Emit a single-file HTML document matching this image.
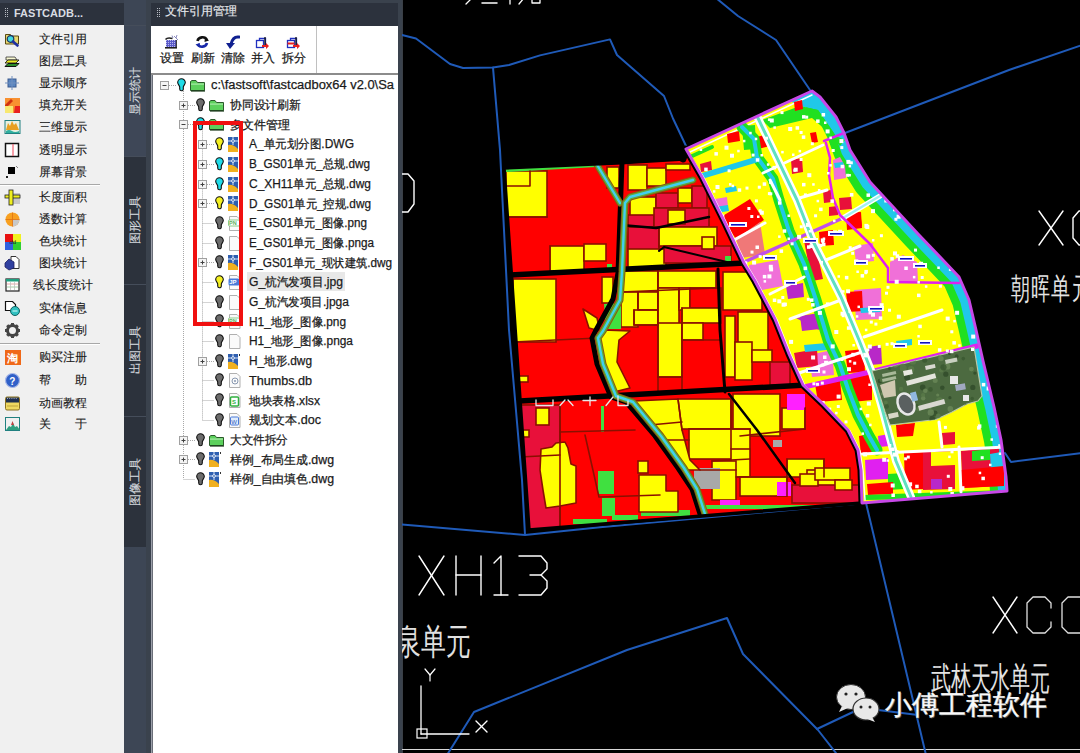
<!DOCTYPE html><html><head><meta charset="utf-8"><style>
*{box-sizing:border-box}
body{margin:0;width:1080px;height:753px;overflow:hidden;background:#000;position:relative;font-family:"Liberation Sans",sans-serif;}
.a{position:absolute}
#lp{left:0;top:0;width:124px;height:753px;background:#f0f0f0}
#lph{left:0;top:0;width:124px;height:25px;background:#2c323d;color:#e8eaee;font-size:12px}
.it{position:absolute;left:0;width:124px;height:16px;font-size:12px;color:#1a1a1a;line-height:16px;-webkit-text-stroke:0.12px #1a1a1a}
.it .t{position:absolute;left:39px;top:0;white-space:nowrap}
.ic{position:absolute;left:4px;top:0;width:17px;height:17px}
.sep{position:absolute;left:0;width:100px;height:2px;background:#a8a8a8;border-bottom:1px solid #fff}
#strip{left:124px;top:0;width:22px;height:753px;background:#3d4655}
#fp{left:146px;top:0;width:256px;height:753px;background:#3a424d}
.tab{position:absolute;left:124px;width:22px;background:#2c323c;border-top:1px solid #454d5a}
.vt{position:absolute;color:#d4d8de;font-size:12px;-webkit-text-stroke:0.15px #d4d8de;white-space:nowrap;transform:rotate(-90deg);transform-origin:center}
.tr{position:absolute;height:18px;font-size:12px;color:#1e1e1e;line-height:18px;white-space:nowrap}
.lat{font-size:13px}
</style></head><body>
<svg class="a" style="left:0;top:0" width="1080" height="753" viewBox="0 0 1080 753">
<rect x="402" y="0" width="678" height="753" fill="#000"/>
<rect x="402" y="0" width="1" height="753" fill="#3a3f46"/>
<rect x="402" y="749" width="678" height="1" fill="#d8d8d8"/>
<polyline points="402,35 416,38.5 450,64 463,68 493,67.6 509,65 540,55.4 610,39.4 617,55 664,96 673,118.5 687,148" fill="none" stroke="#1f5ab8" stroke-width="2" stroke-linejoin="round" stroke-linecap="round" />
<polyline points="493,67.6 500,150 509,330 522,480 525,535" fill="none" stroke="#1f5ab8" stroke-width="2" stroke-linejoin="round" stroke-linecap="round" />
<polyline points="716,-2 738,16 776,40 810,90" fill="none" stroke="#1f5ab8" stroke-width="2" stroke-linejoin="round" stroke-linecap="round" />
<polyline points="845,133 1009,70 1082,45" fill="none" stroke="#1f5ab8" stroke-width="2" stroke-linejoin="round" stroke-linecap="round" />
<polyline points="402,524.4 525,535 600,527.2 866,503" fill="none" stroke="#1f5ab8" stroke-width="2" stroke-linejoin="round" stroke-linecap="round" />
<polyline points="866,503 926,755" fill="none" stroke="#1f5ab8" stroke-width="2" stroke-linejoin="round" stroke-linecap="round" />
<polyline points="447,755 474,712 627,650 727,618 743,654 818,730 836,753" fill="none" stroke="#1f5ab8" stroke-width="2" stroke-linejoin="round" stroke-linecap="round" />
<polyline points="817,729 853,712 878,710 918,715" fill="none" stroke="#1f5ab8" stroke-width="2" stroke-linejoin="round" stroke-linecap="round" />
<polyline points="1005,453 1011,462 1082,453" fill="none" stroke="#1f5ab8" stroke-width="2" stroke-linejoin="round" stroke-linecap="round" />
<polygon points="504,168 617,163 683,159 686,149 702,177 724,221 744,263 755,281 775,319 789,354 803,385 824,405 848,430 858,450 861,470 862,503 529,530" fill="#ff0000" stroke="#000" stroke-width="2" stroke-linejoin="round" />
<clipPath id="clL"><polygon points="504,168 617,163 683,159 686,149 702,177 724,221 744,263 755,281 775,319 789,354 803,385 824,405 848,430 858,450 861,470 862,503 529,530"/></clipPath>
<g clip-path="url(#clL)">
<rect x="506" y="171" width="41" height="46" fill="#ffff00" stroke="#8a1000" stroke-width="1.6"/>
<rect x="550" y="246" width="34" height="25" fill="#ffff00" stroke="#8a1000" stroke-width="1.6"/>
<rect x="584" y="244" width="22" height="17" fill="#ffff00" stroke="#8a1000" stroke-width="1.6"/>
<rect x="607" y="167" width="12" height="21" fill="#ffff00" stroke="#8a1000" stroke-width="1.6"/>
<rect x="607" y="264" width="5" height="5" fill="#40e040"/>
<rect x="628" y="165" width="19" height="25" fill="#ffff00" stroke="#8a1000" stroke-width="1.6"/>
<rect x="647" y="168" width="19" height="18" fill="#ffff00" stroke="#8a1000" stroke-width="1.6"/>
<rect x="666" y="164" width="24" height="6" fill="#ffff00" stroke="#8a1000" stroke-width="1.6"/>
<rect x="630" y="197" width="26" height="24" fill="#ffff00" stroke="#8a1000" stroke-width="1.6"/>
<rect x="656" y="193" width="22" height="15" fill="#e8103a" stroke="#8a1000" stroke-width="1.6"/>
<rect x="678" y="188" width="14" height="15" fill="#ffff00" stroke="#8a1000" stroke-width="1.6"/>
<rect x="692" y="186" width="15" height="22" fill="#e8103a" stroke="#8a1000" stroke-width="1.6"/>
<rect x="628" y="215" width="26" height="12" fill="#e8103a" stroke="#8a1000" stroke-width="1.6"/>
<rect x="654" y="208" width="55" height="19" fill="#e8103a" stroke="#8a1000" stroke-width="1.6"/>
<rect x="668" y="210" width="17" height="14" fill="#ffff00" stroke="#8a1000" stroke-width="1.6"/>
<rect x="628" y="227" width="31" height="24" fill="#e8103a" stroke="#8a1000" stroke-width="1.6"/>
<rect x="628" y="249" width="38" height="19" fill="#ffff00" stroke="#8a1000" stroke-width="1.6"/>
<rect x="659" y="227" width="58" height="19" fill="#ffff00" stroke="#8a1000" stroke-width="1.6"/>
<rect x="664" y="246" width="67" height="17" fill="#e8103a" stroke="#8a1000" stroke-width="1.6"/>
<rect x="702" y="237" width="12" height="12" fill="#ffff00" stroke="#8a1000" stroke-width="1.6"/>
<rect x="725" y="256" width="6" height="6" fill="#40e040"/>
<rect x="513" y="279" width="43" height="63" fill="#ffff00" stroke="#8a1000" stroke-width="1.6"/>
<rect x="602" y="277" width="11" height="26" fill="#ffff00" stroke="#8a1000" stroke-width="1.6"/>
<rect x="519" y="376" width="9" height="6" fill="#ffff00" stroke="#8a1000" stroke-width="1.6"/>
<rect x="621" y="271" width="37" height="21" fill="#ffff00" stroke="#8a1000" stroke-width="1.6"/>
<rect x="621" y="292" width="17" height="35" fill="#ffff00" stroke="#8a1000" stroke-width="1.6"/>
<rect x="638" y="292" width="20" height="18" fill="#ffff00" stroke="#8a1000" stroke-width="1.6"/>
<rect x="634" y="310" width="24" height="15" fill="#ffff00" stroke="#8a1000" stroke-width="1.6"/>
<rect x="658" y="271" width="58" height="17" fill="#ffff00" stroke="#8a1000" stroke-width="1.6"/>
<rect x="658" y="288" width="21" height="39" fill="#ffff00" stroke="#8a1000" stroke-width="1.6"/>
<rect x="658" y="323" width="24" height="54" fill="#ffff00" stroke="#8a1000" stroke-width="1.6"/>
<rect x="679" y="288" width="11" height="22" fill="#ffff00" stroke="#8a1000" stroke-width="1.6"/>
<rect x="690" y="288" width="31" height="20" fill="#ff0000" stroke="#8a1000" stroke-width="1.6"/>
<rect x="682" y="308" width="39" height="15" fill="#ffff00" stroke="#8a1000" stroke-width="1.6"/>
<rect x="682" y="323" width="21" height="17" fill="#ffff00" stroke="#8a1000" stroke-width="1.6"/>
<rect x="723" y="272" width="39" height="38" fill="#ffff00" stroke="#8a1000" stroke-width="1.6"/>
<rect x="725" y="316" width="10" height="61" fill="#ffff00" stroke="#8a1000" stroke-width="1.6"/>
<rect x="738" y="312" width="30" height="40" fill="#ffff00" stroke="#8a1000" stroke-width="1.6"/>
<rect x="735" y="342" width="17" height="38" fill="#ffff00" stroke="#8a1000" stroke-width="1.6"/>
<rect x="752" y="350" width="20" height="12" fill="#ffff00" stroke="#8a1000" stroke-width="1.6"/>
<rect x="770" y="362" width="20" height="23" fill="#e8103a" stroke="#8a1000" stroke-width="1.6"/>
<rect x="521" y="405" width="39" height="125" fill="#e8103a" stroke="#8a1000" stroke-width="1.6"/>
<rect x="536" y="408" width="13" height="17" fill="#ffff00" stroke="#8a1000" stroke-width="1.6"/>
<rect x="523" y="430" width="6" height="7" fill="#ffff00" stroke="#8a1000" stroke-width="1.6"/>
<rect x="601" y="406" width="3" height="26" fill="#40e040"/>
<rect x="598" y="471" width="16" height="23" fill="#40e040"/>
<rect x="602" y="498" width="13" height="18" fill="#40e040"/>
<rect x="573" y="519" width="34" height="5" fill="#40e040"/>
<rect x="612" y="515" width="26" height="5" fill="#40e040"/>
<rect x="641" y="510" width="49" height="6" fill="#40e040"/>
<rect x="638" y="461" width="10" height="12" fill="#ffff00" stroke="#8a1000" stroke-width="1.6"/>
<rect x="678" y="399" width="53" height="30" fill="#ffff00" stroke="#8a1000" stroke-width="1.6"/>
<rect x="733" y="394" width="47" height="42" fill="#ffff00" stroke="#8a1000" stroke-width="1.6"/>
<rect x="782" y="408" width="23" height="21" fill="#ffff00" stroke="#8a1000" stroke-width="1.6"/>
<rect x="689" y="429" width="61" height="30" fill="#ffff00" stroke="#8a1000" stroke-width="1.6"/>
<rect x="731" y="449" width="19" height="28" fill="#ffff00" stroke="#8a1000" stroke-width="1.6"/>
<rect x="712" y="461" width="24" height="39" fill="#ffff00" stroke="#8a1000" stroke-width="1.6"/>
<rect x="740" y="477" width="47" height="19" fill="#ffff00" stroke="#8a1000" stroke-width="1.6"/>
<rect x="787" y="459" width="37" height="18" fill="#ffff00" stroke="#8a1000" stroke-width="1.6"/>
<rect x="807" y="470" width="40" height="17" fill="#ffff00" stroke="#8a1000" stroke-width="1.6"/>
<rect x="787" y="394" width="18" height="16" fill="#ff20ff"/>
<rect x="777" y="482" width="14" height="14" fill="#ff20ff"/>
<rect x="720" y="500" width="20" height="7" fill="#ff20ff"/>
<rect x="773" y="440" width="9" height="7" fill="#a8a8a8"/>
<rect x="694" y="468" width="26" height="21" fill="#a8a8a8"/>
<rect x="700" y="505" width="160" height="4" fill="#40e040"/>
<rect x="792" y="485" width="68" height="18" fill="#e8103a" stroke="#8a1000" stroke-width="1.6"/>
<rect x="800" y="474" width="18" height="12" fill="#ffff00" stroke="#8a1000" stroke-width="1.6"/>
<rect x="815" y="468" width="35" height="12" fill="#ffff00" stroke="#8a1000" stroke-width="1.6"/>
<rect x="835" y="480" width="17" height="10" fill="#ffff00" stroke="#8a1000" stroke-width="1.6"/>
<polygon points="506,169 596,164 597,167 506,172" fill="#40e040" />
<polygon points="583,309 597,318 600,331 589,328" fill="#ffff00" stroke="#8a1000" stroke-width="1.6" stroke-linejoin="round" />
<polygon points="604,304 621,303 621,329 606,329" fill="#40e040" />
<polygon points="603,330 630,331 619,340 617,362 630,388 614,392 602,366 599,340" fill="#ffff00" stroke="#8a1000" stroke-width="1.6" stroke-linejoin="round" />
<polygon points="541,449 552,447 556,443 565,442 568,448 571,464 576,466 576,503 560,506 546,508 543,490 540,470" fill="#ffff00" stroke="#8a1000" stroke-width="1.6" stroke-linejoin="round" />
<polygon points="639,475 666,475 666,491 678,491 678,512 639,512" fill="#ffff00" stroke="#8a1000" stroke-width="1.6" stroke-linejoin="round" />
<polygon points="634,401 678,399 682,430 690,460 700,470 686,470 668,450 650,425" fill="#ffff00" stroke="#8a1000" stroke-width="1.6" stroke-linejoin="round" />
<polyline points="506,186 530,186 530,171" fill="none" stroke="#8a1000" stroke-width="1.6" stroke-linejoin="round" stroke-linecap="round" />
<polyline points="513,342 598,338" fill="none" stroke="#8a1000" stroke-width="1.6" stroke-linejoin="round" stroke-linecap="round" />
<polyline points="547,217 506,217" fill="none" stroke="#8a1000" stroke-width="1.6" stroke-linejoin="round" stroke-linecap="round" />
<polyline points="550,246 550,273" fill="none" stroke="#8a1000" stroke-width="1.6" stroke-linejoin="round" stroke-linecap="round" />
<polyline points="658,270 658,392" fill="none" stroke="#8a1000" stroke-width="1.6" stroke-linejoin="round" stroke-linecap="round" />
<polyline points="621,292 716,288" fill="none" stroke="#8a1000" stroke-width="1.6" stroke-linejoin="round" stroke-linecap="round" />
<polyline points="638,292 638,310 658,310" fill="none" stroke="#8a1000" stroke-width="1.6" stroke-linejoin="round" stroke-linecap="round" />
<polyline points="634,310 634,325 658,325" fill="none" stroke="#8a1000" stroke-width="1.6" stroke-linejoin="round" stroke-linecap="round" />
<polyline points="682,308 682,392" fill="none" stroke="#8a1000" stroke-width="1.6" stroke-linejoin="round" stroke-linecap="round" />
<polyline points="658,377 682,377" fill="none" stroke="#8a1000" stroke-width="1.6" stroke-linejoin="round" stroke-linecap="round" />
<polyline points="682,340 721,340" fill="none" stroke="#8a1000" stroke-width="1.6" stroke-linejoin="round" stroke-linecap="round" />
<polyline points="679,288 679,308" fill="none" stroke="#8a1000" stroke-width="1.6" stroke-linejoin="round" stroke-linecap="round" />
<polyline points="628,227 659,227 659,251" fill="none" stroke="#8a1000" stroke-width="1.6" stroke-linejoin="round" stroke-linecap="round" />
<polyline points="520,457 560,455" fill="none" stroke="#8a1000" stroke-width="1.6" stroke-linejoin="round" stroke-linecap="round" />
<polyline points="585,435 599,497" fill="none" stroke="#8a1000" stroke-width="1.6" stroke-linejoin="round" stroke-linecap="round" />
<polyline points="560,432 635,430" fill="none" stroke="#8a1000" stroke-width="1.6" stroke-linejoin="round" stroke-linecap="round" />
<polyline points="600,497 660,495" fill="none" stroke="#8a1000" stroke-width="1.6" stroke-linejoin="round" stroke-linecap="round" />
<polyline points="560,404 560,530" fill="none" stroke="#8a1000" stroke-width="1.6" stroke-linejoin="round" stroke-linecap="round" />
<polyline points="678,399 682,430" fill="none" stroke="#8a1000" stroke-width="1.6" stroke-linejoin="round" stroke-linecap="round" />
<polyline points="731,399 731,449" fill="none" stroke="#8a1000" stroke-width="1.6" stroke-linejoin="round" stroke-linecap="round" />
<polyline points="689,429 750,429" fill="none" stroke="#8a1000" stroke-width="1.6" stroke-linejoin="round" stroke-linecap="round" />
<polyline points="712,461 750,459" fill="none" stroke="#8a1000" stroke-width="1.6" stroke-linejoin="round" stroke-linecap="round" />
<polyline points="736,477 787,477" fill="none" stroke="#8a1000" stroke-width="1.6" stroke-linejoin="round" stroke-linecap="round" />
<polyline points="787,459 787,496" fill="none" stroke="#8a1000" stroke-width="1.6" stroke-linejoin="round" stroke-linecap="round" />
<polyline points="824,459 824,477" fill="none" stroke="#8a1000" stroke-width="1.6" stroke-linejoin="round" stroke-linecap="round" />
<polyline points="650,425 682,422" fill="none" stroke="#8a1000" stroke-width="1.6" stroke-linejoin="round" stroke-linecap="round" />
<polyline points="660,440 689,440" fill="none" stroke="#8a1000" stroke-width="1.6" stroke-linejoin="round" stroke-linecap="round" />
<polyline points="700,470 736,470" fill="none" stroke="#8a1000" stroke-width="1.6" stroke-linejoin="round" stroke-linecap="round" />
<polyline points="740,436 805,429" fill="none" stroke="#8a1000" stroke-width="1.6" stroke-linejoin="round" stroke-linecap="round" />
<polyline points="805,408 805,429" fill="none" stroke="#8a1000" stroke-width="1.6" stroke-linejoin="round" stroke-linecap="round" />
<polyline points="509,275 745,263" fill="none" stroke="#000" stroke-width="5.5" stroke-linejoin="round" stroke-linecap="round" />
<polyline points="520,401 806,385" fill="none" stroke="#000" stroke-width="5.5" stroke-linejoin="round" stroke-linecap="round" />
<polyline points="622,162 618,273 613,299 596,330 592,338 597,364 611,397 626,402 655,436 678,468 692,489 700,514" fill="none" stroke="#000" stroke-width="5" stroke-linejoin="round" stroke-linecap="round" />
<polyline points="729,394 757,430 795,483" fill="none" stroke="#000" stroke-width="2.5" stroke-linejoin="round" stroke-linecap="round" />
<polyline points="718,269 720,330 725,392" fill="none" stroke="#000" stroke-width="3" stroke-linejoin="round" stroke-linecap="round" />
<polyline points="621,225 656,228 709,217" fill="none" stroke="#000" stroke-width="2.5" stroke-linejoin="round" stroke-linecap="round" />
<polyline points="659,251 664,247 731,263" fill="none" stroke="#000" stroke-width="2" stroke-linejoin="round" stroke-linecap="round" />
<polyline points="596,163 620,203" fill="none" stroke="#8a5a10" stroke-width="7" stroke-linejoin="round" stroke-linecap="round" />
<polyline points="596,163 620,203" fill="none" stroke="#60a838" stroke-width="5" stroke-linejoin="round" stroke-linecap="round" />
<polyline points="596,163 620,203" fill="none" stroke="#40d0f0" stroke-width="2.4" stroke-linejoin="round" stroke-linecap="round" />
<polyline points="693,180 630,197 625,203 622,272 620,300 603,331 598,338 603,364 616,396 633,402 661,436 684,468 697,489 705,514" fill="none" stroke="#8a5a10" stroke-width="7" stroke-linejoin="round" stroke-linecap="round" />
<polyline points="693,180 630,197 625,203 622,272 620,300 603,331 598,338 603,364 616,396 633,402 661,436 684,468 697,489 705,514" fill="none" stroke="#60a838" stroke-width="5" stroke-linejoin="round" stroke-linecap="round" />
<polyline points="693,180 630,197 625,203 622,272 620,300 603,331 598,338 603,364 616,396 633,402 661,436 684,468 697,489 705,514" fill="none" stroke="#40d0f0" stroke-width="2.4" stroke-linejoin="round" stroke-linecap="round" />
</g>
<polygon points="504,168 617,163 683,159 686,149 702,177 724,221 744,263 755,281 775,319 789,354 803,385 824,405 848,430 858,450 861,470 862,503 529,530" fill="none" stroke="#000" stroke-width="3.5" stroke-linejoin="round" />
<polyline points="536,400 536,405.5 553,405.5 553,400" fill="none" stroke="#e8e8e8" stroke-width="1.3" stroke-linejoin="round" stroke-linecap="round" />
<polyline points="560,405.5 565,400" fill="none" stroke="#e8e8e8" stroke-width="1.3" stroke-linejoin="round" stroke-linecap="round" />
<polyline points="568,400 573,405.5" fill="none" stroke="#e8e8e8" stroke-width="1.3" stroke-linejoin="round" stroke-linecap="round" />
<polyline points="583,400.5 596,400.5" fill="none" stroke="#e8e8e8" stroke-width="1.3" stroke-linejoin="round" stroke-linecap="round" />
<polyline points="590,397 590,405.5" fill="none" stroke="#e8e8e8" stroke-width="1.3" stroke-linejoin="round" stroke-linecap="round" />
<polyline points="606,405.5 613,397" fill="none" stroke="#e8e8e8" stroke-width="1.3" stroke-linejoin="round" stroke-linecap="round" />
<polyline points="618,396 618,405.5 628,405.5 628,401" fill="none" stroke="#e8e8e8" stroke-width="1.3" stroke-linejoin="round" stroke-linecap="round" />
<polyline points="683,159 686,149 702,177 724,221 744,263 755,281 775,319 789,354 803,385 824,405 848,430 858,450 861,470 862,503" fill="none" stroke="#000" stroke-width="7" stroke-linejoin="round" stroke-linecap="round" />
<polygon points="686,149 812,91 820,97 836,117 844,133 850,150 870,182 894,208 918,234 941,258 959,277 969,300 976,330 983,361 994,407 1001,440 1006,477 1007,491 862,503 861,470 858,450 848,430 824,405 803,385 789,354 775,319 755,281 744,263 724,221 702,177" fill="#ffff00" />
<clipPath id="clR"><polygon points="686,149 812,91 820,97 836,117 844,133 850,150 870,182 894,208 918,234 941,258 959,277 969,300 976,330 983,361 994,407 1001,440 1006,477 1007,491 862,503 861,470 858,450 848,430 824,405 803,385 789,354 775,319 755,281 744,263 724,221 702,177"/></clipPath>
<g clip-path="url(#clR)">
<polyline points="812,91 820,97 836,117 844,133 850,150 870,182 894,208 918,234 941,258 959,277 969,300 976,330 983,361 994,407 1001,440 1006,477 1007,491" fill="none" stroke="#20e020" stroke-width="34" stroke-linejoin="round" stroke-linecap="round" />
<polyline points="812,91 820,97 836,117 844,133 850,150 870,182 894,208 918,234 941,258 959,277 969,300 976,330 983,361 994,407 1001,440 1006,477 1007,491" fill="none" stroke="#20c8e8" stroke-width="18" stroke-linejoin="round" stroke-linecap="round" />
<polygon points="790,101 812,91 836,117 845,138 836,136 818,110 800,106" fill="#20c8e8" />
<polygon points="762,120 800,106 818,110 836,136 845,140 840,146 828,132 812,118 770,128" fill="#20e020" />
<polyline points="690,152 812,95" fill="none" stroke="#ffffff" stroke-width="1.5" stroke-linejoin="round" stroke-linecap="round" />
<polyline points="690,157 712,147" fill="none" stroke="#20e020" stroke-width="4" stroke-linejoin="round" stroke-linecap="round" />
<polygon points="725,188 736,186 737,191 726,193" fill="#20c8e8" />
<polygon points="757,137 768,134 770,146 758,149" fill="#ff0000" />
<polygon points="791,160 802,158 803,172 792,174" fill="#e8103a" />
<polygon points="810,133 816,132 818,142 812,143" fill="#ff0000" />
<polygon points="727,134 739,131 740,141 728,143" fill="#ff0000" />
<polygon points="700,164 711,161 712,170 701,172" fill="#e8103a" />
<polygon points="794,102 802,100 803,109 795,111" fill="#ff0000" />
<polygon points="833,160 840,157 845,166 846,178 834,180" fill="#f070d8" />
<polygon points="834,163 843,162 844,167 835,168" fill="#20c8e8" />
<polygon points="742,126 755,125 756,149 744,150" fill="#20e020" />
<polygon points="721,217 750,199 764,220 736,239" fill="#ff0000" />
<polygon points="736,239 760,222 765,254 742,258" fill="#f07878" />
<polygon points="715,199 727,197 728,207 716,209" fill="#f070d8" />
<polygon points="715,207 728,205 729,211 716,213" fill="#20c8e8" />
<polygon points="749,265 778,260 783,286 752,292" fill="#f070d8" />
<polygon points="786,286 803,283 804,297 788,299" fill="#b828c8" />
<polygon points="804,241 814,239 823,279 812,281" fill="#e8103a" />
<polygon points="848,214 860,212 862,226 850,228" fill="#ff0000" />
<polygon points="819,232 833,230 834,245 820,246" fill="#ff0000" />
<polygon points="823,191 831,190 832,202 824,203" fill="#e8103a" />
<polygon points="839,198 851,197 852,209 840,210" fill="#e8103a" />
<polygon points="829,207 838,206 838,215 829,216" fill="#e8103a" />
<polygon points="846,214 861,212 862,228 847,230" fill="#ff0000" />
<polygon points="854,246 873,243 874,261 856,263" fill="#f070d8" />
<polygon points="890,262 903,255 917,262 918,281 890,283" fill="#f070d8" />
<polygon points="854,290 881,288 882,319 856,320" fill="#f070d8" />
<polygon points="846,292 862,291 863,311 848,312" fill="#ff0000" />
<polygon points="860,308 880,307 880,312 861,313" fill="#20c8e8" />
<polygon points="809,355 832,350 834,375 812,377" fill="#f070d8" />
<polygon points="845,351 864,349 865,372 848,373" fill="#ff0000" />
<polygon points="868,347 881,345 882,364 870,365" fill="#b828c8" />
<polygon points="794,353 817,349 818,366 797,368" fill="#e8103a" />
<polygon points="800,316 819,313 820,329 802,331" fill="#b828c8" />
<polygon points="804,345 827,343 827,350 805,352" fill="#20c8e8" />
<polygon points="896,341 912,339 912,345 897,347" fill="#20c8e8" />
<polygon points="848,378 872,374 872,400 852,402" fill="#ff0000" />
<polygon points="815,384 840,380 842,400 818,402" fill="#ff0000" />
<polygon points="859,436 872,434 873,454 861,455" fill="#ff0000" />
<polygon points="878,436 889,434 890,446 879,447" fill="#e020f0" />
<polygon points="796,318 817,315 819,330" fill="#b828c8" />
<polygon points="894,425 939,420 940,446 895,448" fill="#ffff00" />
<polygon points="896,425 915,423 913,436 897,437" fill="#ff0000" />
<polygon points="942,433 955,432 955,444 943,445" fill="#e8103a" />
<polygon points="865,460 888,458 888,479 866,480" fill="#e020f0" />
<polygon points="888,474 904,473 904,489 888,490" fill="#20e020" />
<polygon points="867,484 893,482 893,494 868,495" fill="#ff0000" />
<polygon points="904,453 923,452 923,489 905,490" fill="#ff0000" />
<polygon points="923,452 955,450 955,489 923,490" fill="#e8103a" />
<polygon points="931,452 955,451 955,465 931,466" fill="#ffff00" />
<polygon points="931,479 942,479 942,489 931,489" fill="#b828c8" />
<polygon points="961,451 999,446 1000,486 962,488" fill="#e8103a" />
<polygon points="972,451 990,449 990,460 972,461" fill="#20e020" />
<polygon points="990,454 1001,452 1002,470 991,471" fill="#20c8e8" />
<polygon points="961,470 1004,466 1004,486 962,488" fill="#ff0000" />
<polygon points="864,495 1005,490 1005,498 864,500" fill="#20e020" />
<polyline points="742,127 754,139 757,157 773,179 779,200 789,231 804,264 816,300 828,340 840,365 848,389 858,415 869,436 877,450" fill="none" stroke="#20e020" stroke-width="11" stroke-linejoin="round" stroke-linecap="round" />
<polyline points="742,127 754,139 757,157 773,179 779,200 789,231 804,264 816,300 828,340 840,365 848,389 858,415 869,436 877,450" fill="none" stroke="#20c8e8" stroke-width="4" stroke-linejoin="round" stroke-linecap="round" />
<polyline points="702,176 755,160" fill="none" stroke="#20c8e8" stroke-width="6" stroke-linejoin="round" stroke-linecap="round" />
<polyline points="763,173 823,145" fill="none" stroke="#ffffff" stroke-width="3" stroke-linejoin="round" stroke-linecap="round" />
<polyline points="734,240 765,223" fill="none" stroke="#ffffff" stroke-width="3" stroke-linejoin="round" stroke-linecap="round" />
<polyline points="796,199 827,190" fill="none" stroke="#ffffff" stroke-width="3" stroke-linejoin="round" stroke-linecap="round" />
<polyline points="826,260 860,246" fill="none" stroke="#ffffff" stroke-width="3" stroke-linejoin="round" stroke-linecap="round" />
<polyline points="770,294 804,277" fill="none" stroke="#ffffff" stroke-width="3" stroke-linejoin="round" stroke-linecap="round" />
<polyline points="790,319 841,300" fill="none" stroke="#ffffff" stroke-width="3" stroke-linejoin="round" stroke-linecap="round" />
<polyline points="790,376 868,350" fill="none" stroke="#ffffff" stroke-width="3" stroke-linejoin="round" stroke-linecap="round" />
<polyline points="864,337 942,310" fill="none" stroke="#ffffff" stroke-width="3" stroke-linejoin="round" stroke-linecap="round" />
<polyline points="862,454 1006,447" fill="none" stroke="#ffffff" stroke-width="3" stroke-linejoin="round" stroke-linecap="round" />
<polyline points="939,422 942,447" fill="none" stroke="#ffffff" stroke-width="3" stroke-linejoin="round" stroke-linecap="round" />
<polyline points="959,447 961,492" fill="none" stroke="#ffffff" stroke-width="3" stroke-linejoin="round" stroke-linecap="round" />
<polyline points="705,215 720,212" fill="none" stroke="#ffffff" stroke-width="3" stroke-linejoin="round" stroke-linecap="round" />
<polyline points="780,200 770,180" fill="none" stroke="#ffffff" stroke-width="3" stroke-linejoin="round" stroke-linecap="round" />
<polyline points="742,263 843,218" fill="none" stroke="#c050e8" stroke-width="3.5" stroke-linejoin="round" stroke-linecap="round" />
<polyline points="843,218 880,196" fill="none" stroke="#ffffff" stroke-width="5" stroke-linejoin="round" stroke-linecap="round" />
<polyline points="843,218 880,196" fill="none" stroke="#a0f0f0" stroke-width="2.5" stroke-linejoin="round" stroke-linecap="round" />
<polyline points="804,387 870,372 977,346" fill="none" stroke="#e020f0" stroke-width="5" stroke-linejoin="round" stroke-linecap="round" />
<polyline points="824,141 844,133" fill="none" stroke="#e020f0" stroke-width="2.5" stroke-linejoin="round" stroke-linecap="round" />
<polyline points="826,143 830,158 829,175 833,198 840,215 870,244 888,268 888,282 959,283" fill="none" stroke="#e020f0" stroke-width="2.5" stroke-linejoin="round" stroke-linecap="round" />
<polyline points="757,116 797,200 813,241 841,297 859,340 872,373 882,408 896,461 911,497" fill="none" stroke="#ffffff" stroke-width="8" stroke-linejoin="round" stroke-linecap="round" />
<polyline points="757,116 797,200 813,241 841,297 859,340 872,373 882,408 896,461 911,497" fill="none" stroke="#60e0c0" stroke-width="3" stroke-linejoin="round" stroke-linecap="round" />
<polygon points="872,371 974,347 982,396 978,401 967,404 951,412.5 936,419.5 907,423 890,425 885,412" fill="#4c6a40" stroke="#b8c8a8" stroke-width="1.2" stroke-linejoin="round" />
<clipPath id="clP"><polygon points="872,371 974,347 982,396 978,401 967,404 951,412.5 936,419.5 907,423 890,425 885,412"/></clipPath><g clip-path="url(#clP)">
<circle cx="901.1" cy="389.0" r="2.2" fill="#5a7a48" opacity="0.8"/>
<circle cx="938.7" cy="356.5" r="1.5" fill="#5a7a48" opacity="0.8"/>
<circle cx="903.2" cy="367.9" r="3.5" fill="#5a7a48" opacity="0.8"/>
<circle cx="930.5" cy="389.4" r="2.3" fill="#3a5830" opacity="0.8"/>
<circle cx="900.5" cy="362.3" r="3.4" fill="#5a7a48" opacity="0.8"/>
<circle cx="949.9" cy="397.7" r="1.6" fill="#2f4a28" opacity="0.8"/>
<circle cx="907.2" cy="354.1" r="3.2" fill="#5a7a48" opacity="0.8"/>
<circle cx="935.7" cy="414.6" r="2.3" fill="#5a7a48" opacity="0.8"/>
<circle cx="916.3" cy="406.5" r="2.4" fill="#3a5830" opacity="0.8"/>
<circle cx="963.3" cy="358.6" r="1.8" fill="#3a5830" opacity="0.8"/>
<circle cx="903.0" cy="397.7" r="3.1" fill="#6a8858" opacity="0.8"/>
<circle cx="918.9" cy="408.7" r="2.6" fill="#5a7a48" opacity="0.8"/>
<circle cx="934.7" cy="413.5" r="2.9" fill="#2f4a28" opacity="0.8"/>
<circle cx="961.1" cy="419.4" r="2.8" fill="#3a5830" opacity="0.8"/>
<circle cx="945.8" cy="374.2" r="2.6" fill="#2f4a28" opacity="0.8"/>
<circle cx="947.2" cy="366.4" r="3.2" fill="#6a8858" opacity="0.8"/>
<circle cx="905.6" cy="356.3" r="3.2" fill="#5a7a48" opacity="0.8"/>
<circle cx="886.6" cy="406.4" r="2.3" fill="#3a5830" opacity="0.8"/>
<circle cx="880.0" cy="381.0" r="2.3" fill="#2f4a28" opacity="0.8"/>
<circle cx="882.3" cy="393.8" r="1.6" fill="#6a8858" opacity="0.8"/>
<circle cx="931.4" cy="414.7" r="2.1" fill="#3a5830" opacity="0.8"/>
<circle cx="974.9" cy="373.1" r="1.7" fill="#2f4a28" opacity="0.8"/>
<circle cx="970.0" cy="418.1" r="2.1" fill="#6a8858" opacity="0.8"/>
<circle cx="893.2" cy="354.9" r="3.2" fill="#6a8858" opacity="0.8"/>
<circle cx="912.9" cy="361.4" r="3.2" fill="#5a7a48" opacity="0.8"/>
<circle cx="922.7" cy="387.4" r="2.8" fill="#2f4a28" opacity="0.8"/>
<circle cx="938.2" cy="416.0" r="2.5" fill="#5a7a48" opacity="0.8"/>
<circle cx="939.5" cy="400.7" r="3.4" fill="#5a7a48" opacity="0.8"/>
<circle cx="972.8" cy="387.4" r="2.6" fill="#2f4a28" opacity="0.8"/>
<circle cx="954.5" cy="419.1" r="2.1" fill="#5a7a48" opacity="0.8"/>
<circle cx="937.7" cy="395.0" r="1.6" fill="#6a8858" opacity="0.8"/>
<circle cx="923.2" cy="398.2" r="2.2" fill="#6a8858" opacity="0.8"/>
<circle cx="949.6" cy="353.5" r="1.6" fill="#2f4a28" opacity="0.8"/>
<circle cx="971.4" cy="369.1" r="2.4" fill="#6a8858" opacity="0.8"/>
<circle cx="895.2" cy="364.6" r="3.0" fill="#6a8858" opacity="0.8"/>
<circle cx="907.1" cy="377.6" r="3.0" fill="#2f4a28" opacity="0.8"/>
<circle cx="972.2" cy="398.5" r="1.8" fill="#3a5830" opacity="0.8"/>
<circle cx="941.4" cy="370.3" r="2.2" fill="#5a7a48" opacity="0.8"/>
<circle cx="941.0" cy="358.6" r="2.7" fill="#6a8858" opacity="0.8"/>
<circle cx="943.5" cy="367.3" r="3.1" fill="#3a5830" opacity="0.8"/>
<circle cx="885.8" cy="402.5" r="1.9" fill="#5a7a48" opacity="0.8"/>
<circle cx="904.2" cy="405.5" r="1.6" fill="#3a5830" opacity="0.8"/>
<circle cx="908.6" cy="408.9" r="2.6" fill="#6a8858" opacity="0.8"/>
<circle cx="911.0" cy="408.3" r="1.7" fill="#6a8858" opacity="0.8"/>
<circle cx="935.2" cy="380.6" r="2.5" fill="#6a8858" opacity="0.8"/>
<circle cx="923.1" cy="395.1" r="2.1" fill="#5a7a48" opacity="0.8"/>
<circle cx="881.4" cy="380.1" r="1.9" fill="#5a7a48" opacity="0.8"/>
<circle cx="969.5" cy="411.8" r="3.5" fill="#5a7a48" opacity="0.8"/>
<circle cx="932.2" cy="419.0" r="2.9" fill="#2f4a28" opacity="0.8"/>
<circle cx="950.3" cy="408.9" r="2.8" fill="#6a8858" opacity="0.8"/>
<circle cx="930.8" cy="412.5" r="3.2" fill="#6a8858" opacity="0.8"/>
<circle cx="889.6" cy="368.6" r="1.6" fill="#3a5830" opacity="0.8"/>
<circle cx="965.0" cy="413.2" r="2.7" fill="#2f4a28" opacity="0.8"/>
<circle cx="924.7" cy="360.2" r="2.5" fill="#3a5830" opacity="0.8"/>
<circle cx="942.3" cy="387.7" r="2.3" fill="#2f4a28" opacity="0.8"/>
<circle cx="911.1" cy="369.2" r="3.2" fill="#5a7a48" opacity="0.8"/>
<circle cx="956.7" cy="356.2" r="1.9" fill="#2f4a28" opacity="0.8"/>
<circle cx="929.9" cy="407.5" r="1.8" fill="#6a8858" opacity="0.8"/>
<circle cx="967.4" cy="406.8" r="3.1" fill="#2f4a28" opacity="0.8"/>
<circle cx="925.3" cy="390.8" r="2.3" fill="#6a8858" opacity="0.8"/>
<polygon points="880,385 895,380 896,396 884,398" fill="#d0c8b0" />
<rect x="906" y="381" width="30" height="5" fill="#e4e4dc" transform="rotate(-15 906 381)"/>
<rect x="903" y="371" width="9" height="5" fill="#e8e8e0" transform="rotate(-12 903 371)"/>
<rect x="882" y="374" width="14" height="3" fill="#a8b898" transform="rotate(-12 882 374)"/>
<rect x="882" y="379" width="14" height="3" fill="#a8b898" transform="rotate(-12 882 379)"/>
<rect x="925" y="366" width="10" height="4" fill="#d8d8d0" transform="rotate(-12 925 366)"/>
<rect x="945" y="360" width="12" height="4" fill="#c8d0c0" transform="rotate(-12 945 360)"/>
<rect x="918" y="406" width="27" height="5" fill="#d8d8d0" transform="rotate(-15 918 406)"/>
<rect x="950" y="376" width="8" height="8" fill="#e8e8e8" transform="rotate(0 950 376)"/>
<rect x="963" y="395" width="6" height="6" fill="#e8e8e8" transform="rotate(0 963 395)"/>
<rect x="955" y="385" width="10" height="6" fill="#a0a8c0" transform="rotate(-10 955 385)"/>
<rect x="888" y="414" width="10" height="5" fill="#d8d8c8" transform="rotate(-12 888 414)"/>
<ellipse cx="906" cy="404" rx="8" ry="11" fill="#5a6060" stroke="#e8e8e8" stroke-width="2.5" transform="rotate(-25 906 404)"/>
<rect x="910" y="393" width="6" height="9" fill="#90b8e0" transform="rotate(-15 910 393)"/>
</g>
<rect x="792.0" y="153.5" width="2.5" height="2.5" fill="#fff"/>
<rect x="805.2" y="115.7" width="3" height="3" fill="#fff"/>
<rect x="729.0" y="183.1" width="2.5" height="2.5" fill="#fff"/>
<rect x="871.8" y="253.8" width="3" height="3" fill="#fff"/>
<rect x="781.2" y="150.9" width="2.5" height="2.5" fill="#fff"/>
<rect x="869.8" y="320.6" width="3" height="3" fill="#fff"/>
<rect x="749.2" y="131.8" width="2.5" height="2.5" fill="#fff"/>
<rect x="867.8" y="344.6" width="4" height="4" fill="#fff"/>
<rect x="904.3" y="266.5" width="3.5" height="3.5" fill="#fff"/>
<rect x="803.9" y="193.4" width="3" height="3" fill="#fff"/>
<rect x="870.9" y="306.3" width="3.5" height="3.5" fill="#fff"/>
<rect x="821.7" y="400.9" width="3" height="3" fill="#fff"/>
<rect x="865.8" y="414.0" width="3.5" height="3.5" fill="#fff"/>
<rect x="797.1" y="234.9" width="4" height="4" fill="#fff"/>
<rect x="872.7" y="278.1" width="2.5" height="2.5" fill="#fff"/>
<rect x="779.6" y="249.4" width="3.5" height="3.5" fill="#fff"/>
<rect x="742.9" y="139.8" width="2.5" height="2.5" fill="#fff"/>
<rect x="758.7" y="209.3" width="3" height="3" fill="#fff"/>
<rect x="846.4" y="159.9" width="4" height="4" fill="#fff"/>
<rect x="863.1" y="452.4" width="4" height="4" fill="#fff"/>
<rect x="820.8" y="238.4" width="4" height="4" fill="#fff"/>
<rect x="745.5" y="186.6" width="3" height="3" fill="#fff"/>
<rect x="747.4" y="207.0" width="3" height="3" fill="#fff"/>
<rect x="822.0" y="242.7" width="3.5" height="3.5" fill="#fff"/>
<rect x="852.4" y="344.0" width="2.5" height="2.5" fill="#fff"/>
<rect x="866.2" y="254.4" width="4" height="4" fill="#fff"/>
<rect x="755.8" y="158.2" width="3.5" height="3.5" fill="#fff"/>
<rect x="868.5" y="310.9" width="3.5" height="3.5" fill="#fff"/>
<rect x="755.5" y="245.5" width="3.5" height="3.5" fill="#fff"/>
<rect x="839.4" y="139.1" width="4" height="4" fill="#fff"/>
<rect x="998.2" y="444.2" width="3.5" height="3.5" fill="#fff"/>
<rect x="802.0" y="182.9" width="3.5" height="3.5" fill="#fff"/>
<rect x="890.5" y="342.2" width="3" height="3" fill="#fff"/>
<rect x="943.9" y="425.9" width="3" height="3" fill="#fff"/>
<rect x="938.9" y="284.7" width="3" height="3" fill="#fff"/>
<rect x="908.1" y="482.3" width="4" height="4" fill="#fff"/>
<rect x="838.1" y="229.8" width="4" height="4" fill="#fff"/>
<rect x="886.6" y="459.3" width="2.5" height="2.5" fill="#fff"/>
<rect x="841.0" y="358.4" width="2.5" height="2.5" fill="#fff"/>
<rect x="812.4" y="382.3" width="3" height="3" fill="#fff"/>
<rect x="840.6" y="164.8" width="3.5" height="3.5" fill="#fff"/>
<rect x="917.4" y="281.0" width="2.5" height="2.5" fill="#fff"/>
<rect x="730.0" y="153.7" width="4" height="4" fill="#fff"/>
<rect x="950.4" y="492.0" width="3.5" height="3.5" fill="#fff"/>
<rect x="861.5" y="432.4" width="2.5" height="2.5" fill="#fff"/>
<rect x="834.3" y="330.0" width="4" height="4" fill="#fff"/>
<rect x="950.5" y="450.3" width="3" height="3" fill="#fff"/>
<rect x="857.5" y="305.6" width="2.5" height="2.5" fill="#fff"/>
<rect x="737.2" y="149.8" width="2.5" height="2.5" fill="#fff"/>
<rect x="865.3" y="225.0" width="4" height="4" fill="#fff"/>
<rect x="866.5" y="193.4" width="3.5" height="3.5" fill="#fff"/>
<rect x="777.3" y="299.3" width="4" height="4" fill="#fff"/>
<rect x="849.9" y="193.0" width="3.5" height="3.5" fill="#fff"/>
<rect x="980.7" y="456.2" width="3" height="3" fill="#fff"/>
<rect x="712.9" y="190.2" width="2.5" height="2.5" fill="#fff"/>
<rect x="757.0" y="215.5" width="2.5" height="2.5" fill="#fff"/>
<rect x="825.9" y="302.4" width="3.5" height="3.5" fill="#fff"/>
<rect x="822.7" y="237.5" width="2.5" height="2.5" fill="#fff"/>
<rect x="864.5" y="271.7" width="2.5" height="2.5" fill="#fff"/>
<rect x="811.1" y="303.1" width="3.5" height="3.5" fill="#fff"/>
<rect x="977.1" y="426.1" width="3.5" height="3.5" fill="#fff"/>
<rect x="817.9" y="310.9" width="4" height="4" fill="#fff"/>
<rect x="824.0" y="121.5" width="2.5" height="2.5" fill="#fff"/>
<rect x="832.9" y="230.4" width="4" height="4" fill="#fff"/>
<rect x="765.1" y="136.7" width="3" height="3" fill="#fff"/>
<rect x="772.5" y="165.9" width="3.5" height="3.5" fill="#fff"/>
<rect x="888.0" y="308.7" width="3" height="3" fill="#fff"/>
<rect x="781.3" y="296.0" width="3" height="3" fill="#fff"/>
<rect x="767.4" y="274.4" width="4" height="4" fill="#fff"/>
<rect x="896.8" y="314.7" width="4" height="4" fill="#fff"/>
<rect x="757.8" y="185.7" width="3" height="3" fill="#fff"/>
<rect x="890.3" y="257.1" width="3.5" height="3.5" fill="#fff"/>
<rect x="810.0" y="298.4" width="3.5" height="3.5" fill="#fff"/>
<rect x="704.2" y="167.6" width="3.5" height="3.5" fill="#fff"/>
<rect x="830.4" y="199.4" width="3.5" height="3.5" fill="#fff"/>
<rect x="787.5" y="237.5" width="2.5" height="2.5" fill="#fff"/>
<rect x="795.6" y="126.2" width="3.5" height="3.5" fill="#fff"/>
<rect x="848.4" y="174.0" width="2.5" height="2.5" fill="#fff"/>
<rect x="814.1" y="214.3" width="3" height="3" fill="#fff"/>
<rect x="917.0" y="293.6" width="3.5" height="3.5" fill="#fff"/>
<rect x="971.0" y="348.0" width="3" height="3" fill="#fff"/>
<rect x="869.1" y="423.7" width="2.5" height="2.5" fill="#fff"/>
<rect x="950.3" y="330.3" width="3" height="3" fill="#fff"/>
<rect x="890.7" y="483.5" width="4" height="4" fill="#fff"/>
<rect x="953.3" y="319.9" width="2.5" height="2.5" fill="#fff"/>
<rect x="848.4" y="310.4" width="2.5" height="2.5" fill="#fff"/>
<rect x="924.9" y="285.3" width="2.5" height="2.5" fill="#fff"/>
<rect x="894.7" y="279.8" width="4" height="4" fill="#fff"/>
<rect x="780.5" y="111.1" width="3" height="3" fill="#fff"/>
<rect x="714.4" y="152.1" width="3.5" height="3.5" fill="#fff"/>
<rect x="842.0" y="290.2" width="2.5" height="2.5" fill="#fff"/>
<rect x="781.6" y="302.7" width="4" height="4" fill="#fff"/>
<rect x="836.8" y="405.0" width="3" height="3" fill="#fff"/>
<rect x="788.2" y="127.0" width="4" height="4" fill="#fff"/>
<rect x="948.3" y="487.0" width="4" height="4" fill="#fff"/>
<rect x="978.7" y="471.7" width="2.5" height="2.5" fill="#fff"/>
<rect x="844.9" y="275.9" width="3.5" height="3.5" fill="#fff"/>
<rect x="919.1" y="261.8" width="4" height="4" fill="#fff"/>
<rect x="981.8" y="382.9" width="3.5" height="3.5" fill="#fff"/>
<rect x="769.8" y="118.5" width="4" height="4" fill="#fff"/>
<rect x="803.6" y="266.6" width="3.5" height="3.5" fill="#fff"/>
<rect x="937.3" y="266.5" width="2.5" height="2.5" fill="#fff"/>
<rect x="945.8" y="349.4" width="3" height="3" fill="#fff"/>
<rect x="920.7" y="276.0" width="3" height="3" fill="#fff"/>
<rect x="893.0" y="208.8" width="2.5" height="2.5" fill="#fff"/>
<rect x="743.8" y="261.3" width="3.5" height="3.5" fill="#fff"/>
<rect x="896.6" y="214.7" width="4" height="4" fill="#fff"/>
<rect x="945.7" y="316.6" width="4" height="4" fill="#fff"/>
<rect x="831.7" y="149.0" width="3" height="3" fill="#fff"/>
<rect x="766.9" y="163.3" width="2.5" height="2.5" fill="#fff"/>
<rect x="790.6" y="242.3" width="3" height="3" fill="#fff"/>
<rect x="820.0" y="260.9" width="3" height="3" fill="#fff"/>
<rect x="808.7" y="230.0" width="2.5" height="2.5" fill="#fff"/>
<rect x="846.9" y="326.3" width="3.5" height="3.5" fill="#fff"/>
<rect x="888.3" y="444.0" width="3" height="3" fill="#fff"/>
<rect x="811.1" y="355.5" width="4" height="4" fill="#fff"/>
<rect x="990.5" y="438.3" width="2.5" height="2.5" fill="#fff"/>
<rect x="837.5" y="275.2" width="2.5" height="2.5" fill="#fff"/>
<rect x="760.5" y="154.0" width="2.5" height="2.5" fill="#fff"/>
<rect x="986.6" y="386.5" width="4" height="4" fill="#fff"/>
<rect x="915.2" y="484.7" width="3.5" height="3.5" fill="#fff"/>
<rect x="856.4" y="270.5" width="2.5" height="2.5" fill="#fff"/>
<rect x="721.3" y="214.5" width="3" height="3" fill="#fff"/>
<rect x="812.2" y="183.2" width="2.5" height="2.5" fill="#fff"/>
<rect x="893.0" y="452.6" width="4" height="4" fill="#fff"/>
<rect x="855.8" y="315.2" width="2.5" height="2.5" fill="#fff"/>
<rect x="847.0" y="367.2" width="4" height="4" fill="#fff"/>
<rect x="715.5" y="185.0" width="4" height="4" fill="#fff"/>
<rect x="822.5" y="370.5" width="3" height="3" fill="#fff"/>
<rect x="846.1" y="173.8" width="3" height="3" fill="#fff"/>
<rect x="762.7" y="182.3" width="3.5" height="3.5" fill="#fff"/>
<rect x="882.2" y="457.8" width="4" height="4" fill="#fff"/>
<rect x="821.4" y="363.4" width="3" height="3" fill="#fff"/>
<rect x="820.8" y="381.6" width="3" height="3" fill="#fff"/>
<rect x="793.7" y="167.7" width="4" height="4" fill="#fff"/>
<rect x="809.3" y="244.5" width="3.5" height="3.5" fill="#fff"/>
<rect x="829.4" y="136.5" width="2.5" height="2.5" fill="#fff"/>
<rect x="778.1" y="235.4" width="2.5" height="2.5" fill="#fff"/>
<rect x="866.8" y="401.6" width="4" height="4" fill="#fff"/>
<rect x="948.9" y="268.4" width="2.5" height="2.5" fill="#fff"/>
<rect x="860.6" y="274.1" width="3.5" height="3.5" fill="#fff"/>
<rect x="884.3" y="199.0" width="3.5" height="3.5" fill="#fff"/>
<rect x="917.3" y="335.0" width="2.5" height="2.5" fill="#fff"/>
<rect x="769.1" y="267.4" width="4" height="4" fill="#fff"/>
<rect x="737.7" y="188.3" width="3.5" height="3.5" fill="#fff"/>
<rect x="835.1" y="411.8" width="2.5" height="2.5" fill="#fff"/>
<rect x="851.2" y="251.8" width="3" height="3" fill="#fff"/>
<rect x="767.9" y="118.4" width="2.5" height="2.5" fill="#fff"/>
<rect x="841.7" y="314.2" width="3" height="3" fill="#fff"/>
<rect x="998.8" y="452.5" width="2.5" height="2.5" fill="#fff"/>
<rect x="773.4" y="126.3" width="2.5" height="2.5" fill="#fff"/>
<rect x="859.6" y="407.7" width="2.5" height="2.5" fill="#fff"/>
<rect x="778.0" y="201.2" width="3.5" height="3.5" fill="#fff"/>
<rect x="767.9" y="192.1" width="3" height="3" fill="#fff"/>
<rect x="769.3" y="192.3" width="3" height="3" fill="#fff"/>
<rect x="762.8" y="274.9" width="3.5" height="3.5" fill="#fff"/>
<rect x="727.6" y="169.3" width="3" height="3" fill="#fff"/>
<rect x="877.8" y="344.9" width="3" height="3" fill="#fff"/>
<rect x="977.9" y="424.4" width="3.5" height="3.5" fill="#fff"/>
<rect x="818.8" y="243.7" width="3.5" height="3.5" fill="#fff"/>
<rect x="846.1" y="289.3" width="4" height="4" fill="#fff"/>
<rect x="863.3" y="352.8" width="2.5" height="2.5" fill="#fff"/>
<rect x="895.7" y="254.3" width="3.5" height="3.5" fill="#fff"/>
<rect x="819.1" y="207.6" width="3.5" height="3.5" fill="#fff"/>
<rect x="821.6" y="113.0" width="3.5" height="3.5" fill="#fff"/>
<rect x="893.0" y="251.4" width="4" height="4" fill="#fff"/>
<rect x="863.7" y="353.4" width="4" height="4" fill="#fff"/>
<rect x="806.8" y="297.8" width="3" height="3" fill="#fff"/>
<rect x="799.6" y="158.0" width="3" height="3" fill="#fff"/>
<rect x="844.5" y="420.4" width="3" height="3" fill="#fff"/>
<rect x="789.1" y="339.9" width="4" height="4" fill="#fff"/>
<rect x="906.8" y="455.6" width="3" height="3" fill="#fff"/>
<rect x="885.6" y="342.8" width="3" height="3" fill="#fff"/>
<rect x="758.7" y="255.1" width="3" height="3" fill="#fff"/>
<rect x="810.8" y="142.2" width="3" height="3" fill="#fff"/>
<rect x="995.8" y="424.8" width="3" height="3" fill="#fff"/>
<rect x="878.8" y="316.4" width="3.5" height="3.5" fill="#fff"/>
<rect x="894.4" y="217.8" width="3" height="3" fill="#fff"/>
<rect x="824.1" y="360.8" width="4" height="4" fill="#fff"/>
<rect x="848.6" y="164.9" width="2.5" height="2.5" fill="#fff"/>
<rect x="885.0" y="291.7" width="3" height="3" fill="#fff"/>
<rect x="830.7" y="344.4" width="4" height="4" fill="#fff"/>
<rect x="816.1" y="119.4" width="3.5" height="3.5" fill="#fff"/>
<rect x="825.6" y="129.4" width="4" height="4" fill="#fff"/>
<rect x="848.9" y="360.1" width="2.5" height="2.5" fill="#fff"/>
<rect x="848.7" y="246.2" width="3" height="3" fill="#fff"/>
<rect x="724.5" y="145.7" width="4" height="4" fill="#fff"/>
<rect x="952.4" y="341.1" width="3.5" height="3.5" fill="#fff"/>
<rect x="772.8" y="298.5" width="3.5" height="3.5" fill="#fff"/>
<rect x="807.3" y="173.2" width="4" height="4" fill="#fff"/>
<rect x="904.1" y="457.3" width="3" height="3" fill="#fff"/>
<rect x="960.4" y="486.2" width="4" height="4" fill="#fff"/>
<rect x="864.9" y="328.7" width="2.5" height="2.5" fill="#fff"/>
<rect x="807.0" y="245.3" width="3.5" height="3.5" fill="#fff"/>
<rect x="871.9" y="239.0" width="2.5" height="2.5" fill="#fff"/>
<rect x="829.3" y="164.1" width="2.5" height="2.5" fill="#fff"/>
<rect x="783.4" y="302.6" width="3.5" height="3.5" fill="#fff"/>
<rect x="891.4" y="493.5" width="3.5" height="3.5" fill="#fff"/>
<rect x="759.8" y="210.7" width="4" height="4" fill="#fff"/>
<rect x="821.6" y="240.6" width="2.5" height="2.5" fill="#fff"/>
<rect x="731.6" y="184.7" width="2.5" height="2.5" fill="#fff"/>
<rect x="801.8" y="135.4" width="3.5" height="3.5" fill="#fff"/>
<rect x="858.2" y="260.6" width="3.5" height="3.5" fill="#fff"/>
<rect x="886.5" y="285.8" width="3" height="3" fill="#fff"/>
<rect x="912.9" y="275.9" width="2.5" height="2.5" fill="#fff"/>
<rect x="891.0" y="447.5" width="3.5" height="3.5" fill="#fff"/>
<rect x="816.6" y="199.8" width="2.5" height="2.5" fill="#fff"/>
<rect x="971.2" y="334.6" width="4" height="4" fill="#fff"/>
<rect x="879.6" y="303.2" width="4" height="4" fill="#fff"/>
<rect x="817.9" y="189.0" width="2.5" height="2.5" fill="#fff"/>
<rect x="752.1" y="260.6" width="4" height="4" fill="#fff"/>
<rect x="787.5" y="214.5" width="2.5" height="2.5" fill="#fff"/>
<rect x="840.5" y="311.7" width="4" height="4" fill="#fff"/>
<rect x="836.6" y="394.6" width="4" height="4" fill="#fff"/>
<rect x="981.4" y="476.7" width="3.5" height="3.5" fill="#fff"/>
<rect x="864.4" y="269.9" width="3.5" height="3.5" fill="#fff"/>
<rect x="849.8" y="161.3" width="3" height="3" fill="#fff"/>
<rect x="750.5" y="250.6" width="3" height="3" fill="#fff"/>
<rect x="955.1" y="310.8" width="4" height="4" fill="#fff"/>
<rect x="918.3" y="324.7" width="3.5" height="3.5" fill="#fff"/>
<rect x="874.4" y="322.6" width="3" height="3" fill="#fff"/>
<rect x="798.6" y="149.9" width="2.5" height="2.5" fill="#fff"/>
<rect x="699.7" y="148.5" width="2.5" height="2.5" fill="#fff"/>
<rect x="948.2" y="455.6" width="2.5" height="2.5" fill="#fff"/>
<rect x="914.0" y="248.6" width="3" height="3" fill="#fff"/>
<rect x="754.8" y="137.7" width="2.5" height="2.5" fill="#fff"/>
<rect x="989.0" y="463.7" width="2.5" height="2.5" fill="#fff"/>
<rect x="949.9" y="349.7" width="3.5" height="3.5" fill="#fff"/>
<rect x="840.3" y="146.1" width="3" height="3" fill="#fff"/>
<rect x="782.8" y="229.3" width="3.5" height="3.5" fill="#fff"/>
<rect x="805.9" y="222.9" width="4" height="4" fill="#fff"/>
<rect x="958.2" y="344.3" width="2.5" height="2.5" fill="#fff"/>
<rect x="868.3" y="383.5" width="2.5" height="2.5" fill="#fff"/>
<rect x="871.0" y="209.1" width="4" height="4" fill="#fff"/>
<rect x="930.1" y="491.0" width="2.5" height="2.5" fill="#fff"/>
<rect x="799.6" y="131.0" width="3" height="3" fill="#fff"/>
<rect x="946.8" y="474.8" width="3" height="3" fill="#fff"/>
<rect x="937.9" y="348.2" width="3.5" height="3.5" fill="#fff"/>
<rect x="823.0" y="355.5" width="3.5" height="3.5" fill="#fff"/>
<rect x="754.9" y="199.4" width="3" height="3" fill="#fff"/>
<rect x="763.6" y="280.1" width="2.5" height="2.5" fill="#fff"/>
<rect x="799.8" y="225.3" width="3" height="3" fill="#fff"/>
<rect x="864.4" y="223.9" width="4" height="4" fill="#fff"/>
<rect x="828.2" y="407.6" width="3" height="3" fill="#fff"/>
<rect x="750.3" y="215.0" width="3" height="3" fill="#fff"/>
<rect x="917.9" y="489.7" width="3.5" height="3.5" fill="#fff"/>
<rect x="879.9" y="234.2" width="3" height="3" fill="#fff"/>
<rect x="793.3" y="169.2" width="2.5" height="2.5" fill="#fff"/>
<rect x="751.6" y="153.6" width="3" height="3" fill="#fff"/>
<rect x="827.0" y="172.0" width="2.5" height="2.5" fill="#fff"/>
<rect x="895.5" y="450.1" width="3" height="3" fill="#fff"/>
<rect x="833.0" y="219.7" width="2.5" height="2.5" fill="#fff"/>
<rect x="816.0" y="382.8" width="3" height="3" fill="#fff"/>
<rect x="768.8" y="264.8" width="4" height="4" fill="#fff"/>
<rect x="853.2" y="361.7" width="3" height="3" fill="#fff"/>
<rect x="769.1" y="180.9" width="3" height="3" fill="#fff"/>
<rect x="871.0" y="312.7" width="4" height="4" fill="#fff"/>
<rect x="851.3" y="352.8" width="3.5" height="3.5" fill="#fff"/>
<rect x="854.3" y="259.4" width="4" height="4" fill="#fff"/>
<rect x="802.0" y="115.1" width="3.5" height="3.5" fill="#fff"/>
<rect x="729" y="222" width="18" height="5" fill="#fff"/><rect x="731" y="224" width="14" height="1.6" fill="#1010c0"/>
<rect x="763" y="255" width="14" height="5" fill="#fff"/><rect x="765" y="257" width="10" height="1.6" fill="#1010c0"/>
<rect x="828" y="231" width="16" height="5" fill="#fff"/><rect x="830" y="233" width="12" height="1.6" fill="#1010c0"/>
<rect x="803" y="238" width="15" height="5" fill="#fff"/><rect x="805" y="240" width="11" height="1.6" fill="#1010c0"/>
<rect x="854" y="260" width="14" height="5" fill="#fff"/><rect x="856" y="262" width="10" height="1.6" fill="#1010c0"/>
<rect x="893" y="343" width="14" height="5" fill="#fff"/><rect x="895" y="345" width="10" height="1.6" fill="#1010c0"/>
<rect x="918" y="340" width="14" height="5" fill="#fff"/><rect x="920" y="342" width="10" height="1.6" fill="#1010c0"/>
<rect x="868" y="306" width="16" height="5" fill="#fff"/><rect x="870" y="308" width="12" height="1.6" fill="#1010c0"/>
<rect x="784" y="280" width="13" height="5" fill="#fff"/><rect x="786" y="282" width="9" height="1.6" fill="#1010c0"/>
<rect x="806" y="368" width="14" height="5" fill="#fff"/><rect x="808" y="370" width="10" height="1.6" fill="#1010c0"/>
<rect x="898" y="256" width="16" height="5" fill="#fff"/><rect x="900" y="258" width="12" height="1.6" fill="#1010c0"/>
<rect x="913" y="263" width="14" height="5" fill="#fff"/><rect x="915" y="265" width="10" height="1.6" fill="#1010c0"/>
<rect x="733" y="383" width="16" height="5" fill="#fff"/><rect x="735" y="385" width="12" height="1.6" fill="#1010c0"/>
<rect x="938" y="251" width="14" height="5" fill="#fff"/><rect x="940" y="253" width="10" height="1.6" fill="#1010c0"/>
</g>
<polyline points="688,152 704,178 726,222 746,264 757,282 777,320 791,355 805,386 826,406 850,431 860,451 863,471 865,500" fill="none" stroke="#ffffff" stroke-width="1.5" stroke-linejoin="round" stroke-linecap="round" />
<polygon points="686,149 812,91 820,97 836,117 844,133 850,150 870,182 894,208 918,234 941,258 959,277 969,300 976,330 983,361 994,407 1001,440 1006,477 1007,491 862,503 861,470 858,450 848,430 824,405 803,385 789,354 775,319 755,281 744,263 724,221 702,177" fill="none" stroke="#c848e8" stroke-width="3" stroke-linejoin="round" />
<!--DETAIL-->
<polyline points="419,556 444,595" fill="none" stroke="#ffffff" stroke-width="1.4" stroke-linejoin="round" stroke-linecap="round" />
<polyline points="419,595 444,556" fill="none" stroke="#ffffff" stroke-width="1.4" stroke-linejoin="round" stroke-linecap="round" />
<polyline points="456,556 456,595" fill="none" stroke="#ffffff" stroke-width="1.4" stroke-linejoin="round" stroke-linecap="round" />
<polyline points="481,556 481,595" fill="none" stroke="#ffffff" stroke-width="1.4" stroke-linejoin="round" stroke-linecap="round" />
<polyline points="456,575 481,575" fill="none" stroke="#ffffff" stroke-width="1.4" stroke-linejoin="round" stroke-linecap="round" />
<polyline points="494,563 501,556 501,595" fill="none" stroke="#ffffff" stroke-width="1.4" stroke-linejoin="round" stroke-linecap="round" />
<polyline points="494,595 508,595" fill="none" stroke="#ffffff" stroke-width="1.4" stroke-linejoin="round" stroke-linecap="round" />
<polyline points="519,556 541,556 547,563 547,569 541,575 530,575" fill="none" stroke="#ffffff" stroke-width="1.4" stroke-linejoin="round" stroke-linecap="round" />
<polyline points="541,575 547,581 547,588 541,595 519,595" fill="none" stroke="#ffffff" stroke-width="1.4" stroke-linejoin="round" stroke-linecap="round" />
<polyline points="993,597 1017,633" fill="none" stroke="#ffffff" stroke-width="1.4" stroke-linejoin="round" stroke-linecap="round" />
<polyline points="993,633 1017,597" fill="none" stroke="#ffffff" stroke-width="1.4" stroke-linejoin="round" stroke-linecap="round" />
<polyline points="1051,608 1051,603 1045,597 1033,597 1027,603 1027,627 1033,633 1045,633 1051,627 1051,622" fill="none" stroke="#e0e0e0" stroke-width="1.3" stroke-linejoin="round" stroke-linecap="round" />
<polyline points="1082,597 1068,597 1062,603 1062,627 1068,633 1082,633" fill="none" stroke="#e0e0e0" stroke-width="1.3" stroke-linejoin="round" stroke-linecap="round" />
<polyline points="1039,211 1063,245" fill="none" stroke="#ffffff" stroke-width="1.4" stroke-linejoin="round" stroke-linecap="round" />
<polyline points="1039,245 1063,211" fill="none" stroke="#ffffff" stroke-width="1.4" stroke-linejoin="round" stroke-linecap="round" />
<polyline points="1082,211 1079,211 1073,218 1073,238 1079,245 1082,245" fill="none" stroke="#ffffff" stroke-width="1.4" stroke-linejoin="round" stroke-linecap="round" />
<polyline points="402,174 408,174 414,181 414,204 408,212 402,212" fill="none" stroke="#ffffff" stroke-width="1.4" stroke-linejoin="round" stroke-linecap="round" />
<polyline points="421,686 421,734" fill="none" stroke="#ffffff" stroke-width="1.3" stroke-linejoin="round" stroke-linecap="round" />
<polyline points="421,734 469,734" fill="none" stroke="#ffffff" stroke-width="1.3" stroke-linejoin="round" stroke-linecap="round" />
<rect x="417" y="729" width="10" height="9" fill="none" stroke="#ffffff" stroke-width="1.2"/>
<polyline points="425,669 430,675 435,669" fill="none" stroke="#ffffff" stroke-width="1.2" stroke-linejoin="round" stroke-linecap="round" />
<polyline points="430,675 430,681" fill="none" stroke="#ffffff" stroke-width="1.2" stroke-linejoin="round" stroke-linecap="round" />
<polyline points="476,721 487,732" fill="none" stroke="#ffffff" stroke-width="1.4" stroke-linejoin="round" stroke-linecap="round" />
<polyline points="476,732 487,721" fill="none" stroke="#ffffff" stroke-width="1.4" stroke-linejoin="round" stroke-linecap="round" />
<text x="0" y="0" transform="translate(1011 299) scale(0.95 1.5)" font-family="Liberation Sans, sans-serif" font-size="20" font-weight="200" fill="#e4e4e4" letter-spacing="1.4">朝晖单元</text>
<text x="0" y="0" transform="translate(396 653.5) scale(0.98 1.42)" font-family="Liberation Sans, sans-serif" font-size="25" font-weight="200" fill="#e0e0e0" >泉单元</text>
<text x="0" y="0" transform="translate(931 690) scale(1.0 1.65)" font-family="Liberation Sans, sans-serif" font-size="20" font-weight="200" fill="#e4e4e4" >武林天水单元</text>
<polyline points="466,4 472,-2" fill="none" stroke="#ffffff" stroke-width="1.3" stroke-linejoin="round" stroke-linecap="round" />
<polyline points="482,3 497,3" fill="none" stroke="#ffffff" stroke-width="1.5" stroke-linejoin="round" stroke-linecap="round" />
<polyline points="510,4 510,-2" fill="none" stroke="#ffffff" stroke-width="1.3" stroke-linejoin="round" stroke-linecap="round" />
<polyline points="519,4 524,-2" fill="none" stroke="#ffffff" stroke-width="1.3" stroke-linejoin="round" stroke-linecap="round" />
<polyline points="532,-2 532,3 540,3 540,-2" fill="none" stroke="#ffffff" stroke-width="1.3" stroke-linejoin="round" stroke-linecap="round" />
<g>
<ellipse cx="851" cy="697" rx="14.5" ry="12.5" fill="#e8e8e8" stroke="#333" stroke-width="1"/>
<polygon points="842,706 839,712 848,708" fill="#e8e8e8"/>
<circle cx="846" cy="694" r="1.6" fill="#222"/><circle cx="856" cy="694" r="1.6" fill="#222"/>
<ellipse cx="866" cy="709" rx="13" ry="11" fill="#e8e8e8" stroke="#333" stroke-width="1.2"/>
<polygon points="872,717 875,722 867,719" fill="#e8e8e8"/>
<circle cx="861" cy="707" r="1.5" fill="#222"/><circle cx="870" cy="707" r="1.5" fill="#222"/>
</g>
<text x="0" y="0" transform="translate(885.5 714.5) scale(1.0 1.0)" font-family="Liberation Sans, sans-serif" font-size="26.6" font-weight="400" fill="#555" >小傅工程软件</text>
<text x="0" y="0" transform="translate(884.5 713.5) scale(1.0 1.0)" font-family="Liberation Sans, sans-serif" font-size="26.6" font-weight="400" fill="#fafafa" stroke="#fafafa" stroke-width="0.35">小傅工程软件</text>
</svg>
<div id="lp" class="a">
<div class="a" style="left:0;top:0;width:124px;height:3px;background:#3a4250"></div>
<div id="lph" class="a" style="top:3px;height:22px"><span class="a" style="left:5px;top:5px;width:1px;height:1px;background:#b8bcc4"></span><span class="a" style="left:5px;top:7px;width:1px;height:1px;background:#b8bcc4"></span><span class="a" style="left:5px;top:9px;width:1px;height:1px;background:#b8bcc4"></span><span class="a" style="left:5px;top:11px;width:1px;height:1px;background:#b8bcc4"></span><span class="a" style="left:5px;top:13px;width:1px;height:1px;background:#b8bcc4"></span><span class="a" style="left:7px;top:5px;width:1px;height:1px;background:#b8bcc4"></span><span class="a" style="left:7px;top:7px;width:1px;height:1px;background:#b8bcc4"></span><span class="a" style="left:7px;top:9px;width:1px;height:1px;background:#b8bcc4"></span><span class="a" style="left:7px;top:11px;width:1px;height:1px;background:#b8bcc4"></span><span class="a" style="left:7px;top:13px;width:1px;height:1px;background:#b8bcc4"></span><span class="a" style="left:14px;top:3px;line-height:15px;font-size:11px;font-weight:bold;color:#d8dce2">FASTCADB...</span></div>
<div class="it" style="top:30.7px"><span class="ic" id="lic0"><svg width="17" height="17" viewBox="0 0 17 17" style="position:absolute;left:0;top:0"><path d="M1.5,3.5 h5 l1,1.5 h7 v8 h-13z" fill="#e8d870" stroke="#5a4a10" stroke-width="1"/><circle cx="6.5" cy="8" r="3.3" fill="#40d8e0" stroke="#1a3060" stroke-width="1.2"/><line x1="9" y1="10.5" x2="13.5" y2="14.5" stroke="#2030a0" stroke-width="2.6" stroke-linecap="round"/></svg></span><span class="t" style="left:39px">文件引用</span></div>
<div class="it" style="top:52.6px"><span class="ic" id="lic1"><svg width="17" height="17" viewBox="0 0 17 17" style="position:absolute;left:0;top:0"><path d="M2,7 l11,0 l-2,-3 l-9,0z" fill="#f8f8d0" stroke="#333" stroke-width="0.8"/><path d="M1,10 l3,-3 h11 l-3,3z" fill="#e8e820" stroke="#222" stroke-width="0.9"/><path d="M1,13.5 l3,-3 h11 l-3,3z" fill="#2a8a2a" stroke="#111" stroke-width="1"/></svg></span><span class="t" style="left:39px">图层工具</span></div>
<div class="it" style="top:75.0px"><span class="ic" id="lic2"><svg width="17" height="17" viewBox="0 0 17 17" style="position:absolute;left:0;top:0"><rect x="4" y="4" width="8" height="8" fill="#5a86c0" stroke="#3a5a90" stroke-width="1"/><line x1="1" y1="8" x2="15" y2="8" stroke="#7090c0" stroke-width="1"/><line x1="8" y1="1" x2="8" y2="15" stroke="#7090c0" stroke-width="1"/></svg></span><span class="t" style="left:39px">显示顺序</span></div>
<div class="it" style="top:97.0px"><span class="ic" id="lic3"><svg width="17" height="17" viewBox="0 0 17 17" style="position:absolute;left:0;top:0"><rect x="1" y="1" width="15" height="15" fill="#f89030"/><path d="M1,8 l6,-6 l2,2 l-8,8z" fill="#d03010"/><rect x="1" y="9" width="8" height="7" fill="#f8e870"/><path d="M11,9 h5 v7 h-6z" fill="#e82020"/></svg></span><span class="t" style="left:39px">填充开关</span></div>
<div class="it" style="top:119.3px"><span class="ic" id="lic4"><svg width="17" height="17" viewBox="0 0 17 17" style="position:absolute;left:0;top:0"><rect x="1" y="1.5" width="15" height="13" fill="#e8f0e0" stroke="#208080" stroke-width="1"/><path d="M2,11 l2,-7 l2,3 l2,-5 l2,4 l2,-2 l3,7z" fill="#e8a020"/><path d="M2,12 q3,-2 6,0 t7,0 v2 h-13z" fill="#30b0a0"/></svg></span><span class="t" style="left:39px">三维显示</span></div>
<div class="it" style="top:141.5px"><span class="ic" id="lic5"><svg width="17" height="17" viewBox="0 0 17 17" style="position:absolute;left:0;top:0"><rect x="1.5" y="1.5" width="13" height="13" fill="#fff" stroke="#111" stroke-width="1.5"/><line x1="9" y1="2" x2="9" y2="14" stroke="#f06070" stroke-width="1.2"/></svg></span><span class="t" style="left:39px">透明显示</span></div>
<div class="it" style="top:163.8px"><span class="ic" id="lic6"><svg width="17" height="17" viewBox="0 0 17 17" style="position:absolute;left:0;top:0"><rect x="4" y="3" width="7" height="7" fill="#000"/><rect x="2" y="12" width="2" height="2" fill="#222"/><line x1="12" y1="2" x2="14" y2="4" stroke="#666" stroke-width="0.8"/></svg></span><span class="t" style="left:39px">屏幕背景</span></div>
<div class="it" style="top:188.5px"><span class="ic" id="lic7"><svg width="17" height="17" viewBox="0 0 17 17" style="position:absolute;left:0;top:0"><rect x="6" y="4" width="10" height="11" fill="#c8c8c8"/><rect x="1" y="6" width="15" height="3" fill="#f0f020" stroke="#222" stroke-width="0.8"/><rect x="5" y="1" width="4" height="15" fill="#f0f020" stroke="#222" stroke-width="0.8"/></svg></span><span class="t" style="left:39px">长度面积</span></div>
<div class="it" style="top:210.8px"><span class="ic" id="lic8"><svg width="17" height="17" viewBox="0 0 17 17" style="position:absolute;left:0;top:0"><circle cx="8.5" cy="8.5" r="7" fill="#f8a020"/><path d="M8.5,8.5 h7 a7,7 0 0 1 -7,7z" fill="#c8c8c8"/><line x1="8.5" y1="1.5" x2="8.5" y2="15.5" stroke="#e07010" stroke-width="0.8"/><line x1="1.5" y1="8.5" x2="15.5" y2="8.5" stroke="#e07010" stroke-width="0.8"/></svg></span><span class="t" style="left:39px">透数计算</span></div>
<div class="it" style="top:233.0px"><span class="ic" id="lic9"><svg width="17" height="17" viewBox="0 0 17 17" style="position:absolute;left:0;top:0"><rect x="1" y="1" width="8" height="8" fill="#e81010"/><rect x="9" y="1" width="8" height="8" fill="#f0f020"/><rect x="1" y="9" width="8" height="8" fill="#3060e0"/><rect x="9" y="9" width="8" height="8" fill="#30d030"/><text x="5.5" y="11" font-size="6" fill="#222" font-family="Liberation Sans">dd</text></svg></span><span class="t" style="left:39px">色块统计</span></div>
<div class="it" style="top:255.2px"><span class="ic" id="lic10"><svg width="17" height="17" viewBox="0 0 17 17" style="position:absolute;left:0;top:0"><path d="M7,1.5 h5 l3,3 v9 h-8z" fill="#fff" stroke="#333" stroke-width="1"/><path d="M1,8 l4,-4 l5,3 v6 l-5,2 l-4,-3z" fill="#3040a0" stroke="#202060" stroke-width="0.8"/></svg></span><span class="t" style="left:39px">图块统计</span></div>
<div class="it" style="top:277.2px"><span class="ic" id="lic11"><svg width="17" height="17" viewBox="0 0 17 17" style="position:absolute;left:0;top:0"><rect x="2" y="2" width="13" height="12" fill="#fff" stroke="#222" stroke-width="1.2"/><rect x="2" y="2" width="13" height="2.5" fill="#20a080"/><line x1="3" y1="7" x2="14" y2="7" stroke="#e09090" stroke-width="0.8"/><line x1="3" y1="10" x2="14" y2="10" stroke="#90c090" stroke-width="0.8"/><line x1="6.5" y1="5" x2="6.5" y2="13" stroke="#c0c0c0" stroke-width="0.8"/><line x1="10.5" y1="5" x2="10.5" y2="13" stroke="#c0c0c0" stroke-width="0.8"/></svg></span><span class="t" style="left:33px">线长度统计</span></div>
<div class="it" style="top:299.6px"><span class="ic" id="lic12"><svg width="17" height="17" viewBox="0 0 17 17" style="position:absolute;left:0;top:0"><path d="M1.5,1.5 h7 l3,3 v6 h-10z" fill="#fff" stroke="#111" stroke-width="1.2"/><circle cx="11" cy="11" r="4.5" fill="#30c0c0" stroke="#106060" stroke-width="1"/><line x1="8.5" y1="11" x2="13.5" y2="11" stroke="#e0ffff" stroke-width="1"/></svg></span><span class="t" style="left:39px">实体信息</span></div>
<div class="it" style="top:322.0px"><span class="ic" id="lic13"><svg width="17" height="17" viewBox="0 0 17 17" style="position:absolute;left:0;top:0"><circle cx="8.5" cy="8.5" r="5" fill="none" stroke="#444" stroke-width="3"/><rect x="7" y="1" width="3" height="3.5" fill="#444" transform="rotate(0 8.5 8.5)"/><rect x="7" y="1" width="3" height="3.5" fill="#444" transform="rotate(45 8.5 8.5)"/><rect x="7" y="1" width="3" height="3.5" fill="#444" transform="rotate(90 8.5 8.5)"/><rect x="7" y="1" width="3" height="3.5" fill="#444" transform="rotate(135 8.5 8.5)"/><rect x="7" y="1" width="3" height="3.5" fill="#444" transform="rotate(180 8.5 8.5)"/><rect x="7" y="1" width="3" height="3.5" fill="#444" transform="rotate(225 8.5 8.5)"/><rect x="7" y="1" width="3" height="3.5" fill="#444" transform="rotate(270 8.5 8.5)"/><rect x="7" y="1" width="3" height="3.5" fill="#444" transform="rotate(315 8.5 8.5)"/></svg></span><span class="t" style="left:39px">命令定制</span></div>
<div class="it" style="top:349.0px"><span class="ic" id="lic14"><svg width="17" height="17" viewBox="0 0 17 17" style="position:absolute;left:0;top:0"><rect x="1" y="1" width="16" height="15" fill="#f06818"/><text x="2.5" y="13" font-size="11" fill="#fff" font-weight="700" font-family="Liberation Sans">淘</text></svg></span><span class="t" style="left:39px">购买注册</span></div>
<div class="it" style="top:372.3px"><span class="ic" id="lic15"><svg width="17" height="17" viewBox="0 0 17 17" style="position:absolute;left:0;top:0"><circle cx="8.5" cy="8.5" r="7" fill="#3060c8" stroke="#a8b8e8" stroke-width="1.2"/><text x="5.2" y="12.5" font-size="10" fill="#fff" font-weight="700" font-family="Liberation Sans">?</text></svg></span><span class="t" style="left:39px">帮　　助</span></div>
<div class="it" style="top:394.5px"><span class="ic" id="lic16"><svg width="17" height="17" viewBox="0 0 17 17" style="position:absolute;left:0;top:0"><rect x="1.5" y="2" width="14" height="13" rx="1.5" fill="#f0d860" stroke="#8a7020" stroke-width="1"/><rect x="2" y="2.5" width="13" height="5" fill="#203050"/><line x1="3" y1="3.5" x2="14" y2="3.5" stroke="#c0c8e0" stroke-width="0.8" stroke-dasharray="1 1.2"/><line x1="3" y1="11" x2="14" y2="11" stroke="#a08020" stroke-width="0.6"/></svg></span><span class="t" style="left:39px">动画教程</span></div>
<div class="it" style="top:416.4px"><span class="ic" id="lic17"><svg width="17" height="17" viewBox="0 0 17 17" style="position:absolute;left:0;top:0"><rect x="1.5" y="1.5" width="14" height="13" fill="#f0f0f0" stroke="#208080" stroke-width="1"/><path d="M2,14 l3,-4 l2,1 l2,-4 l2,4 l2,-1 l3,4z" fill="#30a080"/><path d="M7,9 l1.5,-4 l1.5,4z" fill="#c04040"/></svg></span><span class="t" style="left:39px">关　　于</span></div>
<div class="sep" style="top:184px"></div><div class="sep" style="top:342.5px"></div>
</div>
<div id="strip" class="a"></div>
<div class="tab" style="top:25px;height:131px;background:#3e4757"></div>
<div class="vt" style="left:105px;top:82.5px;width:60px;height:16px;line-height:16px;text-align:center">显示统计</div>
<div class="tab" style="top:156px;height:128px;background:#2c323c"></div>
<div class="vt" style="left:105px;top:212.0px;width:60px;height:16px;line-height:16px;text-align:center">图形工具</div>
<div class="tab" style="top:284px;height:132px;background:#2c323c"></div>
<div class="vt" style="left:105px;top:342.0px;width:60px;height:16px;line-height:16px;text-align:center">出图工具</div>
<div class="tab" style="top:416px;height:131px;background:#2c323c"></div>
<div class="vt" style="left:105px;top:473.5px;width:60px;height:16px;line-height:16px;text-align:center">图像工具</div>
<div id="fp" class="a"></div>
<div class="a" style="left:151px;top:3px;width:247px;height:23px;background:#2c323d"></div>
<span class="a" style="left:157px;top:8px;width:1px;height:1px;background:#b8bcc4"></span><span class="a" style="left:157px;top:10px;width:1px;height:1px;background:#b8bcc4"></span><span class="a" style="left:157px;top:12px;width:1px;height:1px;background:#b8bcc4"></span><span class="a" style="left:157px;top:14px;width:1px;height:1px;background:#b8bcc4"></span><span class="a" style="left:157px;top:16px;width:1px;height:1px;background:#b8bcc4"></span><span class="a" style="left:159px;top:8px;width:1px;height:1px;background:#b8bcc4"></span><span class="a" style="left:159px;top:10px;width:1px;height:1px;background:#b8bcc4"></span><span class="a" style="left:159px;top:12px;width:1px;height:1px;background:#b8bcc4"></span><span class="a" style="left:159px;top:14px;width:1px;height:1px;background:#b8bcc4"></span><span class="a" style="left:159px;top:16px;width:1px;height:1px;background:#b8bcc4"></span>
<div class="a" style="left:165px;top:3px;height:17px;line-height:17px;color:#e6e8ec;font-size:12px;-webkit-text-stroke:0.15px #e6e8ec">文件引用管理</div>
<div class="a" style="left:151px;top:26px;width:247px;height:48px;background:#fff"></div>
<div class="a" style="left:316px;top:26px;width:1px;height:47px;background:#c0c0c0"></div>
<div class="a" style="left:151px;top:73px;width:247px;height:2px;background:#8c8c8c"></div>
<div class="a" style="left:164px;top:35px;width:15px;height:15px"><svg width="15" height="15" viewBox="0 0 15 15" style="position:absolute;left:0;top:0"><path d="M1.5,4.5 q2,-2.5 7,-1" stroke="#222" stroke-width="1.6" fill="none"/><rect x="2" y="5" width="10" height="7" fill="#5a5ac8"/><rect x="2" y="5" width="1" height="1" fill="#b8b8f0"/><rect x="2" y="7" width="1" height="1" fill="#b8b8f0"/><rect x="2" y="9" width="1" height="1" fill="#b8b8f0"/><rect x="2" y="11" width="1" height="1" fill="#b8b8f0"/><rect x="4" y="5" width="1" height="1" fill="#b8b8f0"/><rect x="4" y="7" width="1" height="1" fill="#b8b8f0"/><rect x="4" y="9" width="1" height="1" fill="#b8b8f0"/><rect x="4" y="11" width="1" height="1" fill="#b8b8f0"/><rect x="6" y="5" width="1" height="1" fill="#b8b8f0"/><rect x="6" y="7" width="1" height="1" fill="#b8b8f0"/><rect x="6" y="9" width="1" height="1" fill="#b8b8f0"/><rect x="6" y="11" width="1" height="1" fill="#b8b8f0"/><rect x="8" y="5" width="1" height="1" fill="#b8b8f0"/><rect x="8" y="7" width="1" height="1" fill="#b8b8f0"/><rect x="8" y="9" width="1" height="1" fill="#b8b8f0"/><rect x="8" y="11" width="1" height="1" fill="#b8b8f0"/><rect x="10" y="5" width="1" height="1" fill="#b8b8f0"/><rect x="10" y="7" width="1" height="1" fill="#b8b8f0"/><rect x="10" y="9" width="1" height="1" fill="#b8b8f0"/><rect x="10" y="11" width="1" height="1" fill="#b8b8f0"/><line x1="1" y1="12.8" x2="13" y2="12.8" stroke="#111" stroke-width="1.5"/><line x1="12.3" y1="5" x2="12.3" y2="12" stroke="#111" stroke-width="1"/><line x1="10" y1="1" x2="14" y2="5" stroke="#7070b0" stroke-width="0.8"/><line x1="13" y1="0" x2="12" y2="3" stroke="#7070b0" stroke-width="0.8"/><line x1="8" y1="0.5" x2="9" y2="3" stroke="#7070b0" stroke-width="0.8"/></svg></div>
<div class="a" style="left:157px;top:51px;width:30px;text-align:center;font-size:12px;line-height:14px;color:#1a1a1a;-webkit-text-stroke:0.25px #1a1a1a">设置</div>
<div class="a" style="left:194.5px;top:35px;width:15px;height:15px"><svg width="15" height="15" viewBox="0 0 15 15" style="position:absolute;left:0;top:0"><path d="M2.5,6 a5,4.5 0 0 1 9.5,-1" stroke="#111" stroke-width="2.6" fill="none"/><path d="M10,2 l4,3.5 l-4.5,1.5z" fill="#111"/><path d="M12,8 a5,4.5 0 0 1 -9.5,1" stroke="#1828a8" stroke-width="2.6" fill="none"/><path d="M4.5,12.5 l-4,-3 l4.5,-1.5z" fill="#1828a8"/></svg></div>
<div class="a" style="left:187.5px;top:51px;width:30px;text-align:center;font-size:12px;line-height:14px;color:#1a1a1a;-webkit-text-stroke:0.25px #1a1a1a">刷新</div>
<div class="a" style="left:225px;top:35px;width:15px;height:15px"><svg width="15" height="15" viewBox="0 0 15 15" style="position:absolute;left:0;top:0"><path d="M14,2 q-6,-1 -8,7" stroke="#102090" stroke-width="3" fill="none" stroke-linecap="round"/><path d="M1,8 l9,0 l-5,6z" fill="#102090"/></svg></div>
<div class="a" style="left:218px;top:51px;width:30px;text-align:center;font-size:12px;line-height:14px;color:#1a1a1a;-webkit-text-stroke:0.25px #1a1a1a">清除</div>
<div class="a" style="left:255px;top:35px;width:15px;height:15px"><svg width="15" height="15" viewBox="0 0 15 15" style="position:absolute;left:0;top:0"><rect x="1.5" y="5.5" width="7" height="7" fill="#fff" stroke="#2030c0" stroke-width="1.3"/><path d="M4.5,5.5 v-2 h6 v8" fill="none" stroke="#2030c0" stroke-width="1.3"/><path d="M10,2 v10" stroke="#111" stroke-width="1.3"/><path d="M7,10 h4 v-2 l3,3 l-3,3 v-2 h-4z" fill="#e82020"/></svg></div>
<div class="a" style="left:248px;top:51px;width:30px;text-align:center;font-size:12px;line-height:14px;color:#1a1a1a;-webkit-text-stroke:0.25px #1a1a1a">并入</div>
<div class="a" style="left:286px;top:35px;width:15px;height:15px"><svg width="15" height="15" viewBox="0 0 15 15" style="position:absolute;left:0;top:0"><rect x="1.5" y="5.5" width="7" height="7" fill="#fff" stroke="#2030c0" stroke-width="1.3"/><path d="M1.5,7.5 h7 v2 h-7z" fill="#e82020"/><path d="M4.5,5.5 v-2 h6 v8" fill="none" stroke="#2030c0" stroke-width="1.3"/><path d="M10,2 v10" stroke="#111" stroke-width="1.3"/><path d="M7,10 h4 v-2 l3,3 l-3,3 v-2 h-4z" fill="#e82020"/></svg></div>
<div class="a" style="left:279px;top:51px;width:30px;text-align:center;font-size:12px;line-height:14px;color:#1a1a1a;-webkit-text-stroke:0.25px #1a1a1a">拆分</div>
<div class="a" style="left:151px;top:75px;width:247px;height:678px;background:#fff;overflow:hidden" id="tree">
<div class="a" style="left:-151px;top:-75px;width:1080px;height:753px"><div class="a tt" id="tt0" style="left:210.5px;top:75.3px;height:18px;line-height:18px;white-space:nowrap;color:#1a1a1a;-webkit-text-stroke:0.25px #1a1a1a;transform:scaleX(1.0328);transform-origin:0 50%"><span style="font-size:12.5px">c:\fastsoft\fastcadbox64 v2.0\Sa</span></div><div class="a tt" id="tt1" style="left:229.5px;top:95.0px;height:18px;line-height:18px;white-space:nowrap;color:#1a1a1a;-webkit-text-stroke:0.25px #1a1a1a;transform:scaleX(0.9861);transform-origin:0 50%"><span style="font-size:12px">协同设计刷新</span></div><div class="a tt" id="tt2" style="left:229.5px;top:114.7px;height:18px;line-height:18px;white-space:nowrap;color:#1a1a1a;-webkit-text-stroke:0.25px #1a1a1a;transform:scaleX(1.0000);transform-origin:0 50%"><span style="font-size:12px">多文件管理</span></div><div class="a tt" id="tt3" style="left:248.5px;top:134.4px;height:18px;line-height:18px;white-space:nowrap;color:#1a1a1a;-webkit-text-stroke:0.25px #1a1a1a;transform:scaleX(0.9604);transform-origin:0 50%"><span style="font-size:12.5px">A_</span><span style="font-size:12px">单元划分图</span><span style="font-size:12.5px">.DWG</span></div><div class="a tt" id="tt4" style="left:248.5px;top:154.1px;height:18px;line-height:18px;white-space:nowrap;color:#1a1a1a;-webkit-text-stroke:0.25px #1a1a1a;transform:scaleX(0.9407);transform-origin:0 50%"><span style="font-size:12.5px">B_GS01</span><span style="font-size:12px">单元</span><span style="font-size:12.5px">_</span><span style="font-size:12px">总规</span><span style="font-size:12.5px">.dwg</span></div><div class="a tt" id="tt5" style="left:248.5px;top:173.8px;height:18px;line-height:18px;white-space:nowrap;color:#1a1a1a;-webkit-text-stroke:0.25px #1a1a1a;transform:scaleX(0.9555);transform-origin:0 50%"><span style="font-size:12.5px">C_XH11</span><span style="font-size:12px">单元</span><span style="font-size:12.5px">_</span><span style="font-size:12px">总规</span><span style="font-size:12.5px">.dwg</span></div><div class="a tt" id="tt6" style="left:248.5px;top:193.5px;height:18px;line-height:18px;white-space:nowrap;color:#1a1a1a;-webkit-text-stroke:0.25px #1a1a1a;transform:scaleX(0.9435);transform-origin:0 50%"><span style="font-size:12.5px">D_GS01</span><span style="font-size:12px">单元</span><span style="font-size:12.5px">_</span><span style="font-size:12px">控规</span><span style="font-size:12.5px">.dwg</span></div><div class="a tt" id="tt7" style="left:248.5px;top:213.2px;height:18px;line-height:18px;white-space:nowrap;color:#1a1a1a;-webkit-text-stroke:0.25px #1a1a1a;transform:scaleX(0.9323);transform-origin:0 50%"><span style="font-size:12.5px">E_GS01</span><span style="font-size:12px">单元</span><span style="font-size:12.5px">_</span><span style="font-size:12px">图像</span><span style="font-size:12.5px">.png</span></div><div class="a tt" id="tt8" style="left:248.5px;top:232.9px;height:18px;line-height:18px;white-space:nowrap;color:#1a1a1a;-webkit-text-stroke:0.25px #1a1a1a;transform:scaleX(0.9363);transform-origin:0 50%"><span style="font-size:12.5px">E_GS01</span><span style="font-size:12px">单元</span><span style="font-size:12.5px">_</span><span style="font-size:12px">图像</span><span style="font-size:12.5px">.pnga</span></div><div class="a tt" id="tt9" style="left:248.5px;top:252.6px;height:18px;line-height:18px;white-space:nowrap;color:#1a1a1a;-webkit-text-stroke:0.25px #1a1a1a;transform:scaleX(0.9413);transform-origin:0 50%"><span style="font-size:12.5px">F_GS01</span><span style="font-size:12px">单元</span><span style="font-size:12.5px">_</span><span style="font-size:12px">现状建筑</span><span style="font-size:12.5px">.dwg</span></div><div class="a" style="left:247px;top:272px;width:98px;height:19px;background:#e8e8e8"></div><div class="a tt" id="tt10" style="left:248.5px;top:272.3px;height:18px;line-height:18px;white-space:nowrap;color:#1a1a1a;-webkit-text-stroke:0.25px #1a1a1a;transform:scaleX(0.9706);transform-origin:0 50%"><span style="font-size:12.5px">G_</span><span style="font-size:12px">杭汽发项目</span><span style="font-size:12.5px">.jpg</span></div><div class="a tt" id="tt11" style="left:248.5px;top:292.0px;height:18px;line-height:18px;white-space:nowrap;color:#1a1a1a;-webkit-text-stroke:0.25px #1a1a1a;transform:scaleX(0.9634);transform-origin:0 50%"><span style="font-size:12.5px">G_</span><span style="font-size:12px">杭汽发项目</span><span style="font-size:12.5px">.jpga</span></div><div class="a tt" id="tt12" style="left:248.5px;top:311.7px;height:18px;line-height:18px;white-space:nowrap;color:#1a1a1a;-webkit-text-stroke:0.25px #1a1a1a;transform:scaleX(0.9488);transform-origin:0 50%"><span style="font-size:12.5px">H1_</span><span style="font-size:12px">地形</span><span style="font-size:12.5px">_</span><span style="font-size:12px">图像</span><span style="font-size:12.5px">.png</span></div><div class="a tt" id="tt13" style="left:248.5px;top:331.4px;height:18px;line-height:18px;white-space:nowrap;color:#1a1a1a;-webkit-text-stroke:0.25px #1a1a1a;transform:scaleX(0.9526);transform-origin:0 50%"><span style="font-size:12.5px">H1_</span><span style="font-size:12px">地形</span><span style="font-size:12.5px">_</span><span style="font-size:12px">图像</span><span style="font-size:12.5px">.pnga</span></div><div class="a tt" id="tt14" style="left:248.5px;top:351.1px;height:18px;line-height:18px;white-space:nowrap;color:#1a1a1a;-webkit-text-stroke:0.25px #1a1a1a;transform:scaleX(0.9489);transform-origin:0 50%"><span style="font-size:12.5px">H_</span><span style="font-size:12px">地形</span><span style="font-size:12.5px">.dwg</span></div><div class="a tt" id="tt15" style="left:248.5px;top:370.8px;height:18px;line-height:18px;white-space:nowrap;color:#1a1a1a;-webkit-text-stroke:0.25px #1a1a1a;transform:scaleX(1.0075);transform-origin:0 50%"><span style="font-size:12.5px">Thumbs.db</span></div><div class="a tt" id="tt16" style="left:248.5px;top:390.5px;height:18px;line-height:18px;white-space:nowrap;color:#1a1a1a;-webkit-text-stroke:0.25px #1a1a1a;transform:scaleX(0.9726);transform-origin:0 50%"><span style="font-size:12px">地块表格</span><span style="font-size:12.5px">.xlsx</span></div><div class="a tt" id="tt17" style="left:248.5px;top:410.2px;height:18px;line-height:18px;white-space:nowrap;color:#1a1a1a;-webkit-text-stroke:0.25px #1a1a1a;transform:scaleX(1.0050);transform-origin:0 50%"><span style="font-size:12px">规划文本</span><span style="font-size:12.5px">.doc</span></div><div class="a tt" id="tt18" style="left:229.5px;top:429.9px;height:18px;line-height:18px;white-space:nowrap;color:#1a1a1a;-webkit-text-stroke:0.25px #1a1a1a;transform:scaleX(0.9667);transform-origin:0 50%"><span style="font-size:12px">大文件拆分</span></div><div class="a tt" id="tt19" style="left:229.5px;top:449.6px;height:18px;line-height:18px;white-space:nowrap;color:#1a1a1a;-webkit-text-stroke:0.25px #1a1a1a;transform:scaleX(0.9871);transform-origin:0 50%"><span style="font-size:12px">样例</span><span style="font-size:12.5px">_</span><span style="font-size:12px">布局生成</span><span style="font-size:12.5px">.dwg</span></div><div class="a tt" id="tt20" style="left:229.5px;top:469.3px;height:18px;line-height:18px;white-space:nowrap;color:#1a1a1a;-webkit-text-stroke:0.25px #1a1a1a;transform:scaleX(0.9871);transform-origin:0 50%"><span style="font-size:12px">样例</span><span style="font-size:12.5px">_</span><span style="font-size:12px">自由填色</span><span style="font-size:12.5px">.dwg</span></div><svg class="a" style="left:0;top:0" width="1080" height="753"><line x1="183.5" y1="91" x2="183.5" y2="479.0" stroke="#a8a8a8" stroke-width="1" stroke-dasharray="1 1"/><line x1="202.5" y1="129.4" x2="202.5" y2="419.9" stroke="#a8a8a8" stroke-width="1" stroke-dasharray="1 1"/><line x1="169" y1="85.5" x2="176" y2="85.5" stroke="#a8a8a8" stroke-width="1" stroke-dasharray="1 1"/><rect x="160.5" y="81.5" width="8" height="8" fill="#f4f4f4" stroke="#a0a0a0" stroke-width="1"/><line x1="162.5" y1="85.5" x2="166.5" y2="85.5" stroke="#404040" stroke-width="1"/><path d="M177.7,82.5 a3.8,3.8 0 1 1 7.6,0 c0,2 -2,3 -2,4.5 l0,2 a1.6,1.6 0 0 1 -3.6,0 l0,-2 c0,-1.5 -2,-2.5 -2,-4.5z" fill="#20dce8" stroke="#101010" stroke-width="1.1"/><path d="M190.5,81.5 l0,9 l14,0 l0,-8 l-7,0 l-1.5,-2 l-4,0 l-1.5,1z" fill="#5cd05c" stroke="#2a5a2a" stroke-width="1"/><rect x="191" y="83.5" width="13" height="1.2" fill="#a8e8a8"/><line x1="191" y1="91" x2="205" y2="91" stroke="#183818" stroke-width="1.2"/><line x1="188" y1="105.5" x2="195" y2="105.5" stroke="#a8a8a8" stroke-width="1" stroke-dasharray="1 1"/><rect x="179.5" y="101.5" width="8" height="8" fill="#f4f4f4" stroke="#a0a0a0" stroke-width="1"/><line x1="181.5" y1="105.5" x2="185.5" y2="105.5" stroke="#404040" stroke-width="1"/><line x1="183.5" y1="103.5" x2="183.5" y2="107.5" stroke="#404040" stroke-width="1"/><path d="M196.7,102.5 a3.8,3.8 0 1 1 7.6,0 c0,2 -2,3 -2,4.5 l0,2 a1.6,1.6 0 0 1 -3.6,0 l0,-2 c0,-1.5 -2,-2.5 -2,-4.5z" fill="#6c6c6c" stroke="#101010" stroke-width="1.1"/><path d="M209.5,101.5 l0,9 l14,0 l0,-8 l-7,0 l-1.5,-2 l-4,0 l-1.5,1z" fill="#5cd05c" stroke="#2a5a2a" stroke-width="1"/><rect x="210" y="103.5" width="13" height="1.2" fill="#a8e8a8"/><line x1="210" y1="111" x2="224" y2="111" stroke="#183818" stroke-width="1.2"/><line x1="188" y1="124.5" x2="195" y2="124.5" stroke="#a8a8a8" stroke-width="1" stroke-dasharray="1 1"/><rect x="179.5" y="120.5" width="8" height="8" fill="#f4f4f4" stroke="#a0a0a0" stroke-width="1"/><line x1="181.5" y1="124.5" x2="185.5" y2="124.5" stroke="#404040" stroke-width="1"/><path d="M196.7,121.5 a3.8,3.8 0 1 1 7.6,0 c0,2 -2,3 -2,4.5 l0,2 a1.6,1.6 0 0 1 -3.6,0 l0,-2 c0,-1.5 -2,-2.5 -2,-4.5z" fill="#20dce8" stroke="#101010" stroke-width="1.1"/><path d="M209.5,120.5 l0,9 l14,0 l0,-8 l-7,0 l-1.5,-2 l-4,0 l-1.5,1z" fill="#5cd05c" stroke="#2a5a2a" stroke-width="1"/><rect x="210" y="122.5" width="13" height="1.2" fill="#a8e8a8"/><line x1="210" y1="130" x2="224" y2="130" stroke="#183818" stroke-width="1.2"/><line x1="207" y1="144.5" x2="214" y2="144.5" stroke="#a8a8a8" stroke-width="1" stroke-dasharray="1 1"/><rect x="198.5" y="140.5" width="8" height="8" fill="#f4f4f4" stroke="#a0a0a0" stroke-width="1"/><line x1="200.5" y1="144.5" x2="204.5" y2="144.5" stroke="#404040" stroke-width="1"/><line x1="202.5" y1="142.5" x2="202.5" y2="146.5" stroke="#404040" stroke-width="1"/><path d="M215.7,141.5 a3.8,3.8 0 1 1 7.6,0 c0,2 -2,3 -2,4.5 l0,2 a1.6,1.6 0 0 1 -3.6,0 l0,-2 c0,-1.5 -2,-2.5 -2,-4.5z" fill="#f4f020" stroke="#101010" stroke-width="1.1"/><rect x="228" y="137" width="10" height="15" fill="#f0b020"/><path d="M228,137 h10 v12 q-5,-5 -10,-4z" fill="#2f5fb0"/><line x1="233" y1="137" x2="233" y2="145" stroke="#e8f0ff" stroke-width="0.9"/><line x1="228" y1="141" x2="238" y2="141" stroke="#e8f0ff" stroke-width="0.9"/><circle cx="233" cy="141" r="1.4" fill="#2f5fb0" stroke="#fff" stroke-width="0.8"/><rect x="239" y="137" width="1" height="2" fill="#333"/><line x1="207" y1="164.5" x2="214" y2="164.5" stroke="#a8a8a8" stroke-width="1" stroke-dasharray="1 1"/><rect x="198.5" y="160.5" width="8" height="8" fill="#f4f4f4" stroke="#a0a0a0" stroke-width="1"/><line x1="200.5" y1="164.5" x2="204.5" y2="164.5" stroke="#404040" stroke-width="1"/><line x1="202.5" y1="162.5" x2="202.5" y2="166.5" stroke="#404040" stroke-width="1"/><path d="M215.7,161.5 a3.8,3.8 0 1 1 7.6,0 c0,2 -2,3 -2,4.5 l0,2 a1.6,1.6 0 0 1 -3.6,0 l0,-2 c0,-1.5 -2,-2.5 -2,-4.5z" fill="#20dce8" stroke="#101010" stroke-width="1.1"/><rect x="228" y="157" width="10" height="15" fill="#f0b020"/><path d="M228,157 h10 v12 q-5,-5 -10,-4z" fill="#2f5fb0"/><line x1="233" y1="157" x2="233" y2="165" stroke="#e8f0ff" stroke-width="0.9"/><line x1="228" y1="161" x2="238" y2="161" stroke="#e8f0ff" stroke-width="0.9"/><circle cx="233" cy="161" r="1.4" fill="#2f5fb0" stroke="#fff" stroke-width="0.8"/><rect x="239" y="157" width="1" height="2" fill="#333"/><line x1="207" y1="184.5" x2="214" y2="184.5" stroke="#a8a8a8" stroke-width="1" stroke-dasharray="1 1"/><rect x="198.5" y="180.5" width="8" height="8" fill="#f4f4f4" stroke="#a0a0a0" stroke-width="1"/><line x1="200.5" y1="184.5" x2="204.5" y2="184.5" stroke="#404040" stroke-width="1"/><line x1="202.5" y1="182.5" x2="202.5" y2="186.5" stroke="#404040" stroke-width="1"/><path d="M215.7,181.5 a3.8,3.8 0 1 1 7.6,0 c0,2 -2,3 -2,4.5 l0,2 a1.6,1.6 0 0 1 -3.6,0 l0,-2 c0,-1.5 -2,-2.5 -2,-4.5z" fill="#20dce8" stroke="#101010" stroke-width="1.1"/><rect x="228" y="177" width="10" height="15" fill="#f0b020"/><path d="M228,177 h10 v12 q-5,-5 -10,-4z" fill="#2f5fb0"/><line x1="233" y1="177" x2="233" y2="185" stroke="#e8f0ff" stroke-width="0.9"/><line x1="228" y1="181" x2="238" y2="181" stroke="#e8f0ff" stroke-width="0.9"/><circle cx="233" cy="181" r="1.4" fill="#2f5fb0" stroke="#fff" stroke-width="0.8"/><rect x="239" y="177" width="1" height="2" fill="#333"/><line x1="207" y1="203.5" x2="214" y2="203.5" stroke="#a8a8a8" stroke-width="1" stroke-dasharray="1 1"/><rect x="198.5" y="199.5" width="8" height="8" fill="#f4f4f4" stroke="#a0a0a0" stroke-width="1"/><line x1="200.5" y1="203.5" x2="204.5" y2="203.5" stroke="#404040" stroke-width="1"/><line x1="202.5" y1="201.5" x2="202.5" y2="205.5" stroke="#404040" stroke-width="1"/><path d="M215.7,200.5 a3.8,3.8 0 1 1 7.6,0 c0,2 -2,3 -2,4.5 l0,2 a1.6,1.6 0 0 1 -3.6,0 l0,-2 c0,-1.5 -2,-2.5 -2,-4.5z" fill="#f4f020" stroke="#101010" stroke-width="1.1"/><rect x="228" y="196" width="10" height="15" fill="#f0b020"/><path d="M228,196 h10 v12 q-5,-5 -10,-4z" fill="#2f5fb0"/><line x1="233" y1="196" x2="233" y2="204" stroke="#e8f0ff" stroke-width="0.9"/><line x1="228" y1="200" x2="238" y2="200" stroke="#e8f0ff" stroke-width="0.9"/><circle cx="233" cy="200" r="1.4" fill="#2f5fb0" stroke="#fff" stroke-width="0.8"/><rect x="239" y="196" width="1" height="2" fill="#333"/><line x1="202.5" y1="223.5" x2="214" y2="223.5" stroke="#a8a8a8" stroke-width="1" stroke-dasharray="1 1"/><path d="M215.7,220.5 a3.8,3.8 0 1 1 7.6,0 c0,2 -2,3 -2,4.5 l0,2 a1.6,1.6 0 0 1 -3.6,0 l0,-2 c0,-1.5 -2,-2.5 -2,-4.5z" fill="#6c6c6c" stroke="#101010" stroke-width="1.1"/><path d="M229.5,216.5 h7.5 l3,3 v11 h-10.5z" fill="#fafafa" stroke="#b0b0b0" stroke-width="1"/><rect x="228.5" y="220" width="11" height="6" rx="1" fill="#ffffff" stroke="#6cc06c" stroke-width="0.8"/><text x="229" y="225" font-size="5.5" font-weight="bold" fill="#60b060" font-family="Liberation Sans">PN</text><line x1="202.5" y1="243.5" x2="214" y2="243.5" stroke="#a8a8a8" stroke-width="1" stroke-dasharray="1 1"/><path d="M215.7,240.5 a3.8,3.8 0 1 1 7.6,0 c0,2 -2,3 -2,4.5 l0,2 a1.6,1.6 0 0 1 -3.6,0 l0,-2 c0,-1.5 -2,-2.5 -2,-4.5z" fill="#6c6c6c" stroke="#101010" stroke-width="1.1"/><path d="M229.5,236.5 h7.5 l3,3 v11 h-10.5z" fill="#fafafa" stroke="#b0b0b0" stroke-width="1"/><line x1="207" y1="262.5" x2="214" y2="262.5" stroke="#a8a8a8" stroke-width="1" stroke-dasharray="1 1"/><rect x="198.5" y="258.5" width="8" height="8" fill="#f4f4f4" stroke="#a0a0a0" stroke-width="1"/><line x1="200.5" y1="262.5" x2="204.5" y2="262.5" stroke="#404040" stroke-width="1"/><line x1="202.5" y1="260.5" x2="202.5" y2="264.5" stroke="#404040" stroke-width="1"/><path d="M215.7,259.5 a3.8,3.8 0 1 1 7.6,0 c0,2 -2,3 -2,4.5 l0,2 a1.6,1.6 0 0 1 -3.6,0 l0,-2 c0,-1.5 -2,-2.5 -2,-4.5z" fill="#6c6c6c" stroke="#101010" stroke-width="1.1"/><rect x="228" y="255" width="10" height="15" fill="#f0b020"/><path d="M228,255 h10 v12 q-5,-5 -10,-4z" fill="#2f5fb0"/><line x1="233" y1="255" x2="233" y2="263" stroke="#e8f0ff" stroke-width="0.9"/><line x1="228" y1="259" x2="238" y2="259" stroke="#e8f0ff" stroke-width="0.9"/><circle cx="233" cy="259" r="1.4" fill="#2f5fb0" stroke="#fff" stroke-width="0.8"/><rect x="239" y="255" width="1" height="2" fill="#333"/><line x1="202.5" y1="282.5" x2="214" y2="282.5" stroke="#a8a8a8" stroke-width="1" stroke-dasharray="1 1"/><path d="M215.7,279.5 a3.8,3.8 0 1 1 7.6,0 c0,2 -2,3 -2,4.5 l0,2 a1.6,1.6 0 0 1 -3.6,0 l0,-2 c0,-1.5 -2,-2.5 -2,-4.5z" fill="#f4f020" stroke="#101010" stroke-width="1.1"/><path d="M229.5,275.5 h7.5 l3,3 v11 h-10.5z" fill="#fafafa" stroke="#b0b0b0" stroke-width="1"/><rect x="228.5" y="278.5" width="11" height="7" rx="1.5" fill="#4a7ad8"/><text x="229.2" y="284" font-size="6" font-weight="bold" fill="#fff" font-family="Liberation Sans">JP</text><line x1="202.5" y1="302.5" x2="214" y2="302.5" stroke="#a8a8a8" stroke-width="1" stroke-dasharray="1 1"/><path d="M215.7,299.5 a3.8,3.8 0 1 1 7.6,0 c0,2 -2,3 -2,4.5 l0,2 a1.6,1.6 0 0 1 -3.6,0 l0,-2 c0,-1.5 -2,-2.5 -2,-4.5z" fill="#6c6c6c" stroke="#101010" stroke-width="1.1"/><path d="M229.5,295.5 h7.5 l3,3 v11 h-10.5z" fill="#fafafa" stroke="#b0b0b0" stroke-width="1"/><line x1="202.5" y1="321.5" x2="214" y2="321.5" stroke="#a8a8a8" stroke-width="1" stroke-dasharray="1 1"/><path d="M215.7,318.5 a3.8,3.8 0 1 1 7.6,0 c0,2 -2,3 -2,4.5 l0,2 a1.6,1.6 0 0 1 -3.6,0 l0,-2 c0,-1.5 -2,-2.5 -2,-4.5z" fill="#6c6c6c" stroke="#101010" stroke-width="1.1"/><path d="M229.5,314.5 h7.5 l3,3 v11 h-10.5z" fill="#fafafa" stroke="#b0b0b0" stroke-width="1"/><rect x="228.5" y="318" width="11" height="6" rx="1" fill="#ffffff" stroke="#6cc06c" stroke-width="0.8"/><text x="229" y="323" font-size="5.5" font-weight="bold" fill="#60b060" font-family="Liberation Sans">PN</text><line x1="202.5" y1="341.5" x2="214" y2="341.5" stroke="#a8a8a8" stroke-width="1" stroke-dasharray="1 1"/><path d="M215.7,338.5 a3.8,3.8 0 1 1 7.6,0 c0,2 -2,3 -2,4.5 l0,2 a1.6,1.6 0 0 1 -3.6,0 l0,-2 c0,-1.5 -2,-2.5 -2,-4.5z" fill="#6c6c6c" stroke="#101010" stroke-width="1.1"/><path d="M229.5,334.5 h7.5 l3,3 v11 h-10.5z" fill="#fafafa" stroke="#b0b0b0" stroke-width="1"/><line x1="207" y1="361.5" x2="214" y2="361.5" stroke="#a8a8a8" stroke-width="1" stroke-dasharray="1 1"/><rect x="198.5" y="357.5" width="8" height="8" fill="#f4f4f4" stroke="#a0a0a0" stroke-width="1"/><line x1="200.5" y1="361.5" x2="204.5" y2="361.5" stroke="#404040" stroke-width="1"/><line x1="202.5" y1="359.5" x2="202.5" y2="363.5" stroke="#404040" stroke-width="1"/><path d="M215.7,358.5 a3.8,3.8 0 1 1 7.6,0 c0,2 -2,3 -2,4.5 l0,2 a1.6,1.6 0 0 1 -3.6,0 l0,-2 c0,-1.5 -2,-2.5 -2,-4.5z" fill="#6c6c6c" stroke="#101010" stroke-width="1.1"/><rect x="228" y="354" width="10" height="15" fill="#f0b020"/><path d="M228,354 h10 v12 q-5,-5 -10,-4z" fill="#2f5fb0"/><line x1="233" y1="354" x2="233" y2="362" stroke="#e8f0ff" stroke-width="0.9"/><line x1="228" y1="358" x2="238" y2="358" stroke="#e8f0ff" stroke-width="0.9"/><circle cx="233" cy="358" r="1.4" fill="#2f5fb0" stroke="#fff" stroke-width="0.8"/><rect x="239" y="354" width="1" height="2" fill="#333"/><line x1="202.5" y1="380.5" x2="214" y2="380.5" stroke="#a8a8a8" stroke-width="1" stroke-dasharray="1 1"/><path d="M215.7,377.5 a3.8,3.8 0 1 1 7.6,0 c0,2 -2,3 -2,4.5 l0,2 a1.6,1.6 0 0 1 -3.6,0 l0,-2 c0,-1.5 -2,-2.5 -2,-4.5z" fill="#6c6c6c" stroke="#101010" stroke-width="1.1"/><path d="M229.5,373.5 h7.5 l3,3 v11 h-10.5z" fill="#fafafa" stroke="#b0b0b0" stroke-width="1"/><circle cx="235" cy="381" r="3" fill="none" stroke="#8898b0" stroke-width="1"/><circle cx="235" cy="381" r="1" fill="#8898b0"/><line x1="202.5" y1="400.5" x2="214" y2="400.5" stroke="#a8a8a8" stroke-width="1" stroke-dasharray="1 1"/><path d="M215.7,397.5 a3.8,3.8 0 1 1 7.6,0 c0,2 -2,3 -2,4.5 l0,2 a1.6,1.6 0 0 1 -3.6,0 l0,-2 c0,-1.5 -2,-2.5 -2,-4.5z" fill="#6c6c6c" stroke="#101010" stroke-width="1.1"/><path d="M229.5,393.5 h7.5 l3,3 v11 h-10.5z" fill="#fafafa" stroke="#b0b0b0" stroke-width="1"/><rect x="230.5" y="397" width="8" height="9" rx="1" fill="#fff" stroke="#30b040" stroke-width="1.5"/><text x="232" y="404" font-size="6" font-weight="bold" fill="#30b040" font-family="Liberation Sans">S</text><line x1="202.5" y1="420.5" x2="214" y2="420.5" stroke="#a8a8a8" stroke-width="1" stroke-dasharray="1 1"/><path d="M215.7,417.5 a3.8,3.8 0 1 1 7.6,0 c0,2 -2,3 -2,4.5 l0,2 a1.6,1.6 0 0 1 -3.6,0 l0,-2 c0,-1.5 -2,-2.5 -2,-4.5z" fill="#6c6c6c" stroke="#101010" stroke-width="1.1"/><path d="M229.5,413.5 h7.5 l3,3 v11 h-10.5z" fill="#fafafa" stroke="#b0b0b0" stroke-width="1"/><rect x="230.5" y="417" width="8" height="8" rx="1" fill="#e0ecfc" stroke="#4a7ad8" stroke-width="1"/><text x="231.3" y="423.5" font-size="6" fill="#3060c0" font-family="Liberation Sans">W</text><line x1="188" y1="440.5" x2="195" y2="440.5" stroke="#a8a8a8" stroke-width="1" stroke-dasharray="1 1"/><rect x="179.5" y="436.5" width="8" height="8" fill="#f4f4f4" stroke="#a0a0a0" stroke-width="1"/><line x1="181.5" y1="440.5" x2="185.5" y2="440.5" stroke="#404040" stroke-width="1"/><line x1="183.5" y1="438.5" x2="183.5" y2="442.5" stroke="#404040" stroke-width="1"/><path d="M196.7,437.5 a3.8,3.8 0 1 1 7.6,0 c0,2 -2,3 -2,4.5 l0,2 a1.6,1.6 0 0 1 -3.6,0 l0,-2 c0,-1.5 -2,-2.5 -2,-4.5z" fill="#6c6c6c" stroke="#101010" stroke-width="1.1"/><path d="M209.5,436.5 l0,9 l14,0 l0,-8 l-7,0 l-1.5,-2 l-4,0 l-1.5,1z" fill="#5cd05c" stroke="#2a5a2a" stroke-width="1"/><rect x="210" y="438.5" width="13" height="1.2" fill="#a8e8a8"/><line x1="210" y1="446" x2="224" y2="446" stroke="#183818" stroke-width="1.2"/><line x1="188" y1="459.5" x2="195" y2="459.5" stroke="#a8a8a8" stroke-width="1" stroke-dasharray="1 1"/><rect x="179.5" y="455.5" width="8" height="8" fill="#f4f4f4" stroke="#a0a0a0" stroke-width="1"/><line x1="181.5" y1="459.5" x2="185.5" y2="459.5" stroke="#404040" stroke-width="1"/><line x1="183.5" y1="457.5" x2="183.5" y2="461.5" stroke="#404040" stroke-width="1"/><path d="M196.7,456.5 a3.8,3.8 0 1 1 7.6,0 c0,2 -2,3 -2,4.5 l0,2 a1.6,1.6 0 0 1 -3.6,0 l0,-2 c0,-1.5 -2,-2.5 -2,-4.5z" fill="#6c6c6c" stroke="#101010" stroke-width="1.1"/><rect x="209" y="452" width="10" height="15" fill="#f0b020"/><path d="M209,452 h10 v12 q-5,-5 -10,-4z" fill="#2f5fb0"/><line x1="214" y1="452" x2="214" y2="460" stroke="#e8f0ff" stroke-width="0.9"/><line x1="209" y1="456" x2="219" y2="456" stroke="#e8f0ff" stroke-width="0.9"/><circle cx="214" cy="456" r="1.4" fill="#2f5fb0" stroke="#fff" stroke-width="0.8"/><rect x="220" y="452" width="1" height="2" fill="#333"/><line x1="183.5" y1="479.5" x2="195" y2="479.5" stroke="#a8a8a8" stroke-width="1" stroke-dasharray="1 1"/><path d="M196.7,476.5 a3.8,3.8 0 1 1 7.6,0 c0,2 -2,3 -2,4.5 l0,2 a1.6,1.6 0 0 1 -3.6,0 l0,-2 c0,-1.5 -2,-2.5 -2,-4.5z" fill="#6c6c6c" stroke="#101010" stroke-width="1.1"/><rect x="209" y="472" width="10" height="15" fill="#f0b020"/><path d="M209,472 h10 v12 q-5,-5 -10,-4z" fill="#2f5fb0"/><line x1="214" y1="472" x2="214" y2="480" stroke="#e8f0ff" stroke-width="0.9"/><line x1="209" y1="476" x2="219" y2="476" stroke="#e8f0ff" stroke-width="0.9"/><circle cx="214" cy="476" r="1.4" fill="#2f5fb0" stroke="#fff" stroke-width="0.8"/><rect x="220" y="472" width="1" height="2" fill="#333"/></svg></div>
</div>
<div class="a" style="left:151px;top:75px;width:1px;height:678px;background:#9ca0aa"></div><div class="a" style="left:152px;top:75px;width:1px;height:678px;background:#6a6e78"></div>
<div class="a" style="left:193px;top:121px;width:50px;height:205px;border:4.5px solid #f01010"></div>
</body></html>
